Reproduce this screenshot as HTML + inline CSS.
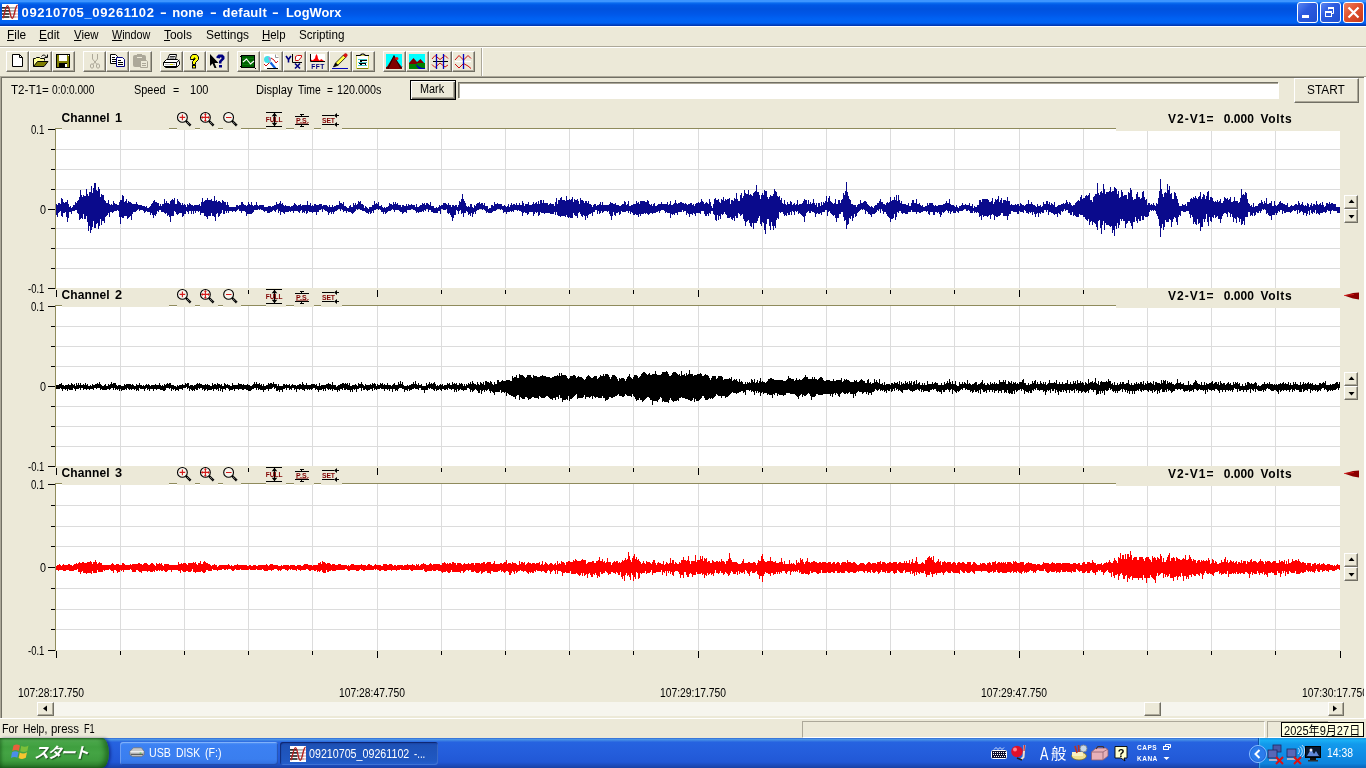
<!DOCTYPE html>
<html lang="ja">
<head>
<meta charset="utf-8">
<title>09210705_09261102 - none - default - LogWorx</title>
<style>
html,body{margin:0;padding:0;}
body{will-change:transform;width:1366px;height:768px;overflow:hidden;background:#ECE9D8;position:relative;
 font-family:"Liberation Sans","Noto Sans CJK JP",sans-serif;font-size:12px;color:#000;}
.abs{position:absolute;}
.tl{position:absolute;left:0;white-space:pre;}
.tl span{position:absolute;top:0;transform-origin:0 0;white-space:pre;}
.t{position:absolute;white-space:nowrap;line-height:14px;}
/* title bar */
#title{left:0;top:0;width:1366px;height:26px;
 background:linear-gradient(to bottom,#3D95FF 0px,#3D95FF 1.500px,#0A6CF0 3px,#0057E5 5px,#0052DE 9px,#0057E8 14px,#0062F3 19px,#0061F2 23px,#0048CC 24.500px,#0032A8 26px);}
#title .cap{left:22px;top:5px;color:#fff;font-weight:bold;font-size:13px;line-height:16px;letter-spacing:.55px;}
.tb{position:absolute;top:2px;width:19px;height:19px;border:1px solid #fff;border-radius:3px;
 background:linear-gradient(135deg,#5B86F2 0%,#2C5BE0 40%,#1F4FD0 100%);}
.tb.close{background:linear-gradient(135deg,#ED8062 0%,#E0512D 45%,#C5381A 100%);}
/* menu */
#menu .t{top:28px;font-size:12px;}
u{text-decoration:underline;}
/* toolbar buttons */
.btn{position:absolute;top:51px;width:21px;height:19px;border-top:1px solid #fff;border-left:1px solid #fff;border-right:1px solid #716F64;border-bottom:1px solid #716F64;box-shadow:inset -1px -1px 0 #ACA899;}
/* plots */
.plot{position:absolute;left:56px;width:1284px;background:#fff;}
.ylab{position:absolute;font-size:12px;line-height:14px;text-align:right;width:40px;left:6px;}
.chn{position:absolute;left:62px;font-weight:bold;font-size:12px;letter-spacing:.6px;line-height:14px;white-space:nowrap;}
.vv{position:absolute;left:1168px;font-weight:bold;font-size:11.5px;letter-spacing:.5px;line-height:14px;white-space:pre;}
.sbtn{position:absolute;left:1344px;width:12px;height:12px;background:#ECE9D8;border-top:1px solid #fff;border-left:1px solid #fff;border-right:1px solid #716F64;border-bottom:1px solid #716F64;box-shadow:inset -1px -1px 0 #ACA899;}
.xl{position:absolute;top:685px;font-size:12px;line-height:14px;white-space:nowrap;letter-spacing:-.2px;}
/* taskbar */
#task{left:0;top:738px;width:1366px;height:30px;
 background:linear-gradient(to bottom,#3168D5 0%,#4993E6 5%,#2663E0 14%,#245DDB 50%,#2158D6 80%,#1941A5 100%);}
</style>
</head>
<body>
<!-- TITLE BAR -->
<div id="title" class="abs">
 <svg class="abs" style="left:2px;top:4px" width="16" height="16" viewBox="0 0 16 16"><rect width="16" height="16" fill="#fff"/><g fill="#000"><rect y="3.200" width="7.500" height="1.400"/><rect y="6.200" width="7.500" height="1.400"/><rect y="9.300" width="7.500" height="1.400"/><rect y="12.300" width="7.500" height="1.400"/></g><g fill="#9a9a9a"><rect x="7.500" y="3.200" width="6.500" height="1.400"/><rect x="7.500" y="6.200" width="6.500" height="1.400"/><rect x="7.500" y="9.300" width="6.500" height="1.400"/><rect x="7.500" y="12.300" width="6.500" height="1.400"/></g><g fill="#f0b0b0"><rect x="13.500" y="3.200" width="2.500" height="1.400"/><rect x="13.500" y="6.200" width="2.500" height="1.400"/><rect x="13.500" y="9.300" width="2.500" height="1.400"/><rect x="13.500" y="12.300" width="2.500" height="1.400"/></g><path d="M0.700 14.200C2.200 13 3.500 1.600 5.500 1.600C7.500 1.600 8 14.200 10.300 14.200C12.500 14.200 12.800 2.200 15.600 1.200" fill="none" stroke="#B82020" stroke-width="1.400"/></svg>
 <div class="tb" style="left:1297px"><div class="abs" style="left:4px;top:12px;width:7px;height:3px;background:#fff"></div></div>
 <div class="tb" style="left:1320px">
  <svg class="abs" style="left:0;top:0" width="19" height="19"><path d="M7.5 6.5V4.5H12.5V10.5H10.5" fill="none" stroke="#fff" stroke-width="1"/><rect x="7" y="4" width="6" height="2" fill="#fff"/><rect x="4.5" y="8.500" width="6" height="5" fill="none" stroke="#fff"/><rect x="4" y="8" width="7" height="2" fill="#fff"/></svg>
 </div>
 <div class="tb close" style="left:1343px">
  <svg class="abs" style="left:0;top:0" width="19" height="19"><path d="M4.5 4.500L14.500 14.500M14.500 4.500L4.500 14.500" stroke="#fff" stroke-width="2.200"/></svg>
 </div>
</div>
<div class="abs" style="left:0;top:26px;width:1366px;height:1px;background:#fff"></div>

<!-- MENU -->
<div class="tl" style="top:28.04px;font-size:12px;line-height:15px;font-weight:normal;font-style:normal;color:#000;"><span style="left:6.91px;transform:scaleX(0.9874)"><u>F</u>ile</span> <span style="left:39.10px;transform:scaleX(0.9958)"><u>E</u>dit</span> <span style="left:73.92px;transform:scaleX(0.9497)"><u>V</u>iew</span> <span style="left:112.04px;transform:scaleX(0.8996)"><u>W</u>indow</span> <span style="left:164.30px;transform:scaleX(0.9959)"><u>T</u>ools</span> <span style="left:205.60px;transform:scaleX(0.9917)">Settings</span> <span style="left:262.42px;transform:scaleX(0.9519)"><u>H</u>elp</span> <span style="left:299.01px;transform:scaleX(0.9724)">Scripting</span></div>
<div class="abs" style="left:0;top:46px;width:1366px;height:1px;background:#ACA899"></div>
<div class="abs" style="left:0;top:47px;width:1366px;height:1px;background:#fff"></div>

<!-- TOOLBAR -->
<div id="toolbar">
<div class="btn" style="left:6px"></div>
<div class="btn" style="left:29px"></div>
<div class="btn" style="left:52px"></div>
<div class="btn" style="left:83px"></div>
<div class="btn" style="left:106px"></div>
<div class="btn" style="left:129px"></div>
<div class="btn" style="left:160px"></div>
<div class="btn" style="left:183px"></div>
<div class="btn" style="left:206px"></div>
<div class="btn" style="left:237px"></div>
<div class="btn" style="left:260px"></div>
<div class="btn" style="left:283px"></div>
<div class="btn" style="left:306px"></div>
<div class="btn" style="left:329px"></div>
<div class="btn" style="left:352px"></div>
<div class="btn" style="left:383px"></div>
<div class="btn" style="left:406px"></div>
<div class="btn" style="left:429px"></div>
<div class="btn" style="left:452px"></div>
<svg class="abs" style="left:0;top:0" width="490" height="76" viewBox="0 0 490 76"><path d="M12.500 54.500H19.500L22.500 57.500V66.500H12.500Z" fill="#fff" stroke="#000"/><path d="M19.500 54.500V57.500H22.500" fill="none" stroke="#000"/>
<path d="M33.500 66.500V58.500H35.500L36.500 57.500H39.500L40.500 58.500H44.500V60.500" fill="#FFFF99" stroke="#000"/><path d="M33.500 66.500L37.500 61.500H48L44 66.500Z" fill="#808000" stroke="#000"/><path d="M41.500 56.500C42.500 54.500 45.500 54.500 46.500 57.500" fill="none" stroke="#000"/><path d="M44.500 57.500H47.500V54.500" fill="none" stroke="#000"/>
<rect x="56.500" y="54.500" width="13" height="13" fill="#808000" stroke="#000"/><rect x="59" y="55" width="8" height="6" fill="#fff"/><rect x="59" y="63" width="8" height="4" fill="#000"/><rect x="65" y="64" width="2" height="3" fill="#fff"/><rect x="68" y="55" width="1" height="1" fill="#fff"/>
<g fill="none" stroke="#ACA899"><path d="M92.500 54V59L97 64.500M97.500 54V59L93 64.500"/><ellipse cx="92" cy="66" rx="1.6" ry="2.200"/><ellipse cx="98" cy="66" rx="1.6" ry="2.200"/></g>
<path d="M110.500 54.500H115.500L117.500 56.500V63.500H110.500Z" fill="#fff" stroke="#000"/><path d="M112 57.500H115M112 59.500H116M112 61.500H116" stroke="#000"/><path d="M116.500 57.500H122.500L124.500 59.500V66.500H116.500Z" fill="#fff" stroke="#000080"/><path d="M118 60.500H121M118 62.500H123M118 64.500H123" stroke="#000"/>
<rect x="133" y="55" width="13" height="12" rx="2" fill="#ACA899"/><rect x="137" y="54" width="5" height="2" fill="#ACA899"/><rect x="137" y="57" width="5" height="1" fill="#ECE9D8"/><path d="M140.500 60.500H146.500L147.500 61.500V67.500H140.500Z" fill="#ECE9D8" stroke="#ACA899"/><path d="M142 63.500H146M142 65.500H146" stroke="#ACA899"/>
<path d="M167.500 59.500L169.500 54.500H176.500L175.500 59.500" fill="#fff" stroke="#000"/><path d="M170 56.500H175M169.500 58H174.500" stroke="#000" stroke-width=".8"/><path d="M163.500 62.500L166.500 59.500H177.500L179.500 61.500V64.500L176.500 67.500H165.500L163.500 65.500Z" fill="#fff" stroke="#000"/><path d="M163.500 62.500H176.500L179.500 60M176.500 62.500V67" fill="none" stroke="#000"/><rect x="165" y="64" width="10" height="1" fill="#C0C0C0"/><rect x="170" y="64" width="3" height="1" fill="#D8D800"/><path d="M164 66.500H176" stroke="#000"/>
<path d="M190.500 58.500V57L192.500 54.500H196.500L198.500 57V59.500L195.500 62.500V64.500H192.500V61.500L195 59V58H194V59.500H190.500Z" fill="#FFFF00" stroke="#000" stroke-linejoin="round"/><rect x="192.500" y="65.500" width="3" height="2.500" fill="#FFFF00" stroke="#000"/>
<path d="M210 54V66L212.500 63.500L214.500 68H216.500L214.500 63H218.500Z" fill="#000"/><path d="M216.500 58V56.500L218.500 54.500H222.500L224.500 56.500V59L221.500 62V63.500H219V61L221.500 58.500V57.500H220V58.500Z" fill="#000080"/><rect x="219" y="65" width="3" height="2.500" fill="#000080"/>
<rect x="241.500" y="55.500" width="13" height="12" fill="#006000" stroke="#000"/><path d="M242 58.500H254M242 61.500H254M242 64.500H254" stroke="#0A7A0A"/><path d="M243 62L246.500 59L250.500 64L254 61" fill="none" stroke="#fff" stroke-width="1.200"/><rect x="240" y="56" width="1" height="1"/><rect x="240" y="66" width="1" height="1"/><rect x="255" y="68" width="1" height="1"/>
<path d="M264 54H276L279 57V69H264Z" fill="#fff"/><path d="M275.500 54.500V57.500H278.500" fill="none" stroke="#9a9a9a"/><path d="M264 64L266 66L269 63L271 58L274 60L276 63L278 61" fill="none" stroke="#D01010"/><circle cx="267.500" cy="59.500" r="3.500" fill="#40E0E8"/><path d="M268 57a3 3 0 0 1 2 5z" fill="#D080D0"/><path d="M270.500 62.500L275.500 68.500" stroke="#1060E0" stroke-width="2.200"/><path d="M267 68.500H278" stroke="#000"/>
<path d="M286 56L288.500 59.500L291 56M288.500 59.500V62.500" fill="none" stroke="#000080" stroke-width="1.600"/><path d="M292.500 54V62.500H302" fill="none" stroke="#000"/><path d="M295.500 59.500V56.500L297.500 55.500H301.500V57L298.500 60.500H295.500Z" fill="#fff" stroke="#D01010"/><path d="M295 63.500L300 68.500M300 63.500L295 68.500" stroke="#000080" stroke-width="1.600"/>
<rect x="310" y="54" width="15" height="8" fill="#fff"/><path d="M311 61V59.500L312 60L313 60.500L314 59L315 58.500L315.500 56L316.500 54L317.500 56L318 58.500L319 60L320 60.500L321 59L322 59.500L323 60.500L324.500 61Z" fill="#FF0000"/><path d="M310.500 54V61.500H325" fill="none" stroke="#000"/><text x="311.200" y="69" font-family="Liberation Sans, sans-serif" font-weight="bold" font-size="6.600" fill="#000080" letter-spacing=".5">FFT</text>
<path d="M335.500 63L343.500 55L345.800 57.300L337.800 65.300Z" fill="#FFFF40" stroke="#000" stroke-width=".8"/><path d="M343.200 55.300L344.500 54a1.600 1.600 0 0 1 2.300 2.300L345.500 57.600Z" fill="#E01010" stroke="#A00000" stroke-width=".5"/><path d="M333.500 67L335.500 63L337.800 65.300Z" fill="#000" stroke="#000" stroke-width=".8"/><path d="M332 68.500H348" stroke="#0000C0"/>
<rect x="356.500" y="55.500" width="12" height="13" fill="#fff" stroke="#D8D860"/><path d="M356 55.500H360L362 54H363.500L365.500 55.500H369" fill="none" stroke="#000" stroke-width="1.200"/><path d="M358 59.500H367M358 62.500H367M358 65.500H367" stroke="#40C8C8"/><path d="M360 60.500H367M359 63.500H366" stroke="#000"/><path d="M357 68.500H368" stroke="#808000"/><rect x="360" y="61" width="2" height="1"/><rect x="360" y="64" width="2" height="1"/><rect x="365" y="64" width="1" height="1"/>
<rect x="386" y="54" width="16" height="15" fill="#00FFFF"/><path d="M386 69V67.500L387.500 66L394 55.500L397 61L401 66L402 67.500V69Z" fill="#800000"/><path d="M386.500 67L388 68.500L394 55.500L400.500 68L402 66.500" fill="none" stroke="#000" stroke-width=".7"/><circle cx="396.800" cy="58.500" r="1.600" fill="#FF0000"/>
<rect x="409" y="54" width="16" height="15" fill="#00FFFF"/><path d="M409 63L413.500 58L417 62L420.500 59L425 64V66H409Z" fill="#800000"/><path d="M409 64H416L418 63H425V69H409Z" fill="#008000"/><path d="M416 64C418 66 420 68 425 68V69H419C417 67 416 66 416 64Z" fill="#0000C0"/>
<path d="M432 59L435 55.500L440 59.500L445 55.500L448 58.500M432 64.500L435 67.500L440 63L445 67L448 65" fill="none" stroke="#D01010"/><path d="M433 61.500H448" stroke="#000"/><path d="M436.500 54V69M443.500 54V69" stroke="#0000C0" stroke-width="1.300"/>
<path d="M455 60L459 55.500L463.500 60L468 55.500L471 58.500M455 64L459 68L463.500 63.500L468 66L471 68.500" fill="none" stroke="#D01010"/><path d="M455 61.500H471" stroke="#fff" stroke-width="1.400"/><path d="M463.500 54V69" stroke="#0000C0" stroke-width="1.300"/></svg>

</div>
<div class="abs" style="left:481px;top:48px;width:1px;height:28px;background:#ACA899"></div>
<div class="abs" style="left:482px;top:48px;width:1px;height:28px;background:#fff"></div>

<!-- CLIENT FRAME -->
<div class="abs" style="left:0;top:76px;width:1366px;height:1px;background:#ACA899"></div>
<div class="abs" style="left:0;top:77px;width:1364px;height:1px;background:#716F64"></div>
<div class="abs" style="left:0;top:76px;width:1px;height:642px;background:#ACA899"></div>
<div class="abs" style="left:1px;top:77px;width:1px;height:641px;background:#716F64"></div>
<div class="abs" style="left:1364px;top:77px;width:2px;height:642px;background:#fff"></div>

<!-- INFO BAR -->
<div class="abs" style="left:410px;top:80px;width:44px;height:18px;border:1px solid #000;background:#ECE9D8;box-shadow:inset 1px 1px 0 #fff,inset -1px -1px 0 #716F64,inset -2px -2px 0 #ACA899;"></div>
<div class="abs" style="left:458px;top:82px;width:819px;height:15px;background:#fff;border-top:1px solid #716F64;border-left:1px solid #716F64;box-shadow:inset 1px 1px 0 #ACA899, 1px 1px 0 #fff;"></div>
<div class="abs" style="left:1294px;top:78px;width:63px;height:23px;background:#ECE9D8;border-top:1px solid #fff;border-left:1px solid #fff;border-right:1px solid #716F64;border-bottom:1px solid #716F64;box-shadow:inset -1px -1px 0 #ACA899;"></div>

<!-- PLOTS -->
<div class="plot" style="top:129px;height:159px"></div>
<div class="plot" style="top:306px;height:160px"></div>
<div class="plot" style="top:484px;height:166px"></div>

<div class="tl" style="top:110.94px;font-size:12px;line-height:15px;font-weight:bold;font-style:normal;color:#000;"><span style="left:61.60px;letter-spacing:0.093px">Channel</span> <span style="left:114.50px;transform:scaleX(1.0617)">1</span></div><div class="tl" style="top:112.04px;font-size:12px;line-height:15px;font-weight:bold;font-style:normal;color:#000;"><span style="left:1167.90px;letter-spacing:1.048px">V2-V1=</span> <span style="left:1223.70px;letter-spacing:0.042px">0.000</span> <span style="left:1260.40px;letter-spacing:0.687px">Volts</span></div><div class="tl" style="top:123.04px;font-size:12px;line-height:15px;font-weight:normal;font-style:normal;color:#000;"><span style="left:31.38px;transform:scaleX(0.8030)">0.1</span></div><div class="tl" style="top:203.04px;font-size:12px;line-height:15px;font-weight:normal;font-style:normal;color:#000;"><span style="left:40.44px;transform:scaleX(0.8972)">0</span></div><div class="tl" style="top:282.04px;font-size:12px;line-height:15px;font-weight:normal;font-style:normal;color:#000;"><span style="left:28.48px;transform:scaleX(0.7879)">-0.1</span></div><div class="sbtn" style="top:195px"></div><div class="sbtn" style="top:209px"></div><div class="tl" style="top:287.94px;font-size:12px;line-height:15px;font-weight:bold;font-style:normal;color:#000;"><span style="left:61.60px;letter-spacing:0.093px">Channel</span> <span style="left:114.50px;transform:scaleX(1.0617)">2</span></div><div class="tl" style="top:289.04px;font-size:12px;line-height:15px;font-weight:bold;font-style:normal;color:#000;"><span style="left:1167.90px;letter-spacing:1.048px">V2-V1=</span> <span style="left:1223.70px;letter-spacing:0.042px">0.000</span> <span style="left:1260.40px;letter-spacing:0.687px">Volts</span></div><div class="tl" style="top:300.04px;font-size:12px;line-height:15px;font-weight:normal;font-style:normal;color:#000;"><span style="left:31.38px;transform:scaleX(0.8030)">0.1</span></div><div class="tl" style="top:380.04px;font-size:12px;line-height:15px;font-weight:normal;font-style:normal;color:#000;"><span style="left:40.44px;transform:scaleX(0.8972)">0</span></div><div class="tl" style="top:460.04px;font-size:12px;line-height:15px;font-weight:normal;font-style:normal;color:#000;"><span style="left:28.48px;transform:scaleX(0.7879)">-0.1</span></div><div class="sbtn" style="top:372px"></div><div class="sbtn" style="top:386px"></div><div class="tl" style="top:465.94px;font-size:12px;line-height:15px;font-weight:bold;font-style:normal;color:#000;"><span style="left:61.60px;letter-spacing:0.093px">Channel</span> <span style="left:114.50px;transform:scaleX(1.0617)">3</span></div><div class="tl" style="top:467.04px;font-size:12px;line-height:15px;font-weight:bold;font-style:normal;color:#000;"><span style="left:1167.90px;letter-spacing:1.048px">V2-V1=</span> <span style="left:1223.70px;letter-spacing:0.042px">0.000</span> <span style="left:1260.40px;letter-spacing:0.687px">Volts</span></div><div class="tl" style="top:478.04px;font-size:12px;line-height:15px;font-weight:normal;font-style:normal;color:#000;"><span style="left:31.38px;transform:scaleX(0.8030)">0.1</span></div><div class="tl" style="top:561.04px;font-size:12px;line-height:15px;font-weight:normal;font-style:normal;color:#000;"><span style="left:40.44px;transform:scaleX(0.8972)">0</span></div><div class="tl" style="top:644.04px;font-size:12px;line-height:15px;font-weight:normal;font-style:normal;color:#000;"><span style="left:28.48px;transform:scaleX(0.7879)">-0.1</span></div><div class="sbtn" style="top:553px"></div><div class="sbtn" style="top:567px"></div>
<svg class="abs" style="left:0;top:0" width="1366" height="768" viewBox="0 0 1366 768" shape-rendering="crispEdges">
 <rect x="120" y="129" width="1" height="159" fill="#dcdcdc"/><rect x="184" y="129" width="1" height="159" fill="#dcdcdc"/><rect x="248" y="129" width="1" height="159" fill="#dcdcdc"/><rect x="312" y="129" width="1" height="159" fill="#dcdcdc"/><rect x="377" y="129" width="1" height="159" fill="#dcdcdc"/><rect x="441" y="129" width="1" height="159" fill="#dcdcdc"/><rect x="505" y="129" width="1" height="159" fill="#dcdcdc"/><rect x="569" y="129" width="1" height="159" fill="#dcdcdc"/><rect x="633" y="129" width="1" height="159" fill="#dcdcdc"/><rect x="698" y="129" width="1" height="159" fill="#dcdcdc"/><rect x="762" y="129" width="1" height="159" fill="#dcdcdc"/><rect x="826" y="129" width="1" height="159" fill="#dcdcdc"/><rect x="890" y="129" width="1" height="159" fill="#dcdcdc"/><rect x="954" y="129" width="1" height="159" fill="#dcdcdc"/><rect x="1019" y="129" width="1" height="159" fill="#dcdcdc"/><rect x="1083" y="129" width="1" height="159" fill="#dcdcdc"/><rect x="1147" y="129" width="1" height="159" fill="#dcdcdc"/><rect x="1211" y="129" width="1" height="159" fill="#dcdcdc"/><rect x="1275" y="129" width="1" height="159" fill="#dcdcdc"/><rect x="56" y="149" width="1284" height="1" fill="#dcdcdc"/><rect x="56" y="169" width="1284" height="1" fill="#dcdcdc"/><rect x="56" y="189" width="1284" height="1" fill="#dcdcdc"/><rect x="56" y="209" width="1284" height="1" fill="#dcdcdc"/><rect x="56" y="228" width="1284" height="1" fill="#dcdcdc"/><rect x="56" y="248" width="1284" height="1" fill="#dcdcdc"/><rect x="56" y="268" width="1284" height="1" fill="#dcdcdc"/><rect x="120" y="306" width="1" height="160" fill="#dcdcdc"/><rect x="184" y="306" width="1" height="160" fill="#dcdcdc"/><rect x="248" y="306" width="1" height="160" fill="#dcdcdc"/><rect x="312" y="306" width="1" height="160" fill="#dcdcdc"/><rect x="377" y="306" width="1" height="160" fill="#dcdcdc"/><rect x="441" y="306" width="1" height="160" fill="#dcdcdc"/><rect x="505" y="306" width="1" height="160" fill="#dcdcdc"/><rect x="569" y="306" width="1" height="160" fill="#dcdcdc"/><rect x="633" y="306" width="1" height="160" fill="#dcdcdc"/><rect x="698" y="306" width="1" height="160" fill="#dcdcdc"/><rect x="762" y="306" width="1" height="160" fill="#dcdcdc"/><rect x="826" y="306" width="1" height="160" fill="#dcdcdc"/><rect x="890" y="306" width="1" height="160" fill="#dcdcdc"/><rect x="954" y="306" width="1" height="160" fill="#dcdcdc"/><rect x="1019" y="306" width="1" height="160" fill="#dcdcdc"/><rect x="1083" y="306" width="1" height="160" fill="#dcdcdc"/><rect x="1147" y="306" width="1" height="160" fill="#dcdcdc"/><rect x="1211" y="306" width="1" height="160" fill="#dcdcdc"/><rect x="1275" y="306" width="1" height="160" fill="#dcdcdc"/><rect x="56" y="326" width="1284" height="1" fill="#dcdcdc"/><rect x="56" y="346" width="1284" height="1" fill="#dcdcdc"/><rect x="56" y="366" width="1284" height="1" fill="#dcdcdc"/><rect x="56" y="386" width="1284" height="1" fill="#dcdcdc"/><rect x="56" y="406" width="1284" height="1" fill="#dcdcdc"/><rect x="56" y="426" width="1284" height="1" fill="#dcdcdc"/><rect x="56" y="446" width="1284" height="1" fill="#dcdcdc"/><rect x="120" y="484" width="1" height="166" fill="#dcdcdc"/><rect x="184" y="484" width="1" height="166" fill="#dcdcdc"/><rect x="248" y="484" width="1" height="166" fill="#dcdcdc"/><rect x="312" y="484" width="1" height="166" fill="#dcdcdc"/><rect x="377" y="484" width="1" height="166" fill="#dcdcdc"/><rect x="441" y="484" width="1" height="166" fill="#dcdcdc"/><rect x="505" y="484" width="1" height="166" fill="#dcdcdc"/><rect x="569" y="484" width="1" height="166" fill="#dcdcdc"/><rect x="633" y="484" width="1" height="166" fill="#dcdcdc"/><rect x="698" y="484" width="1" height="166" fill="#dcdcdc"/><rect x="762" y="484" width="1" height="166" fill="#dcdcdc"/><rect x="826" y="484" width="1" height="166" fill="#dcdcdc"/><rect x="890" y="484" width="1" height="166" fill="#dcdcdc"/><rect x="954" y="484" width="1" height="166" fill="#dcdcdc"/><rect x="1019" y="484" width="1" height="166" fill="#dcdcdc"/><rect x="1083" y="484" width="1" height="166" fill="#dcdcdc"/><rect x="1147" y="484" width="1" height="166" fill="#dcdcdc"/><rect x="1211" y="484" width="1" height="166" fill="#dcdcdc"/><rect x="1275" y="484" width="1" height="166" fill="#dcdcdc"/><rect x="56" y="505" width="1284" height="1" fill="#dcdcdc"/><rect x="56" y="526" width="1284" height="1" fill="#dcdcdc"/><rect x="56" y="546" width="1284" height="1" fill="#dcdcdc"/><rect x="56" y="567" width="1284" height="1" fill="#dcdcdc"/><rect x="56" y="588" width="1284" height="1" fill="#dcdcdc"/><rect x="56" y="609" width="1284" height="1" fill="#dcdcdc"/><rect x="56" y="629" width="1284" height="1" fill="#dcdcdc"/>
 <rect x="55" y="128" width="7" height="1" fill="#8F8B5C"/><rect x="169" y="128" width="8" height="1" fill="#8F8B5C"/><rect x="195" y="128" width="5" height="1" fill="#8F8B5C"/><rect x="218" y="128" width="5" height="1" fill="#8F8B5C"/><rect x="241" y="128" width="25" height="1" fill="#8F8B5C"/><rect x="286" y="128" width="8" height="1" fill="#8F8B5C"/><rect x="314" y="128" width="7" height="1" fill="#8F8B5C"/><rect x="342" y="128" width="774" height="1" fill="#8F8B5C"/><rect x="62" y="129" width="107" height="1" fill="#ECE9D8"/><rect x="177" y="129" width="18" height="1" fill="#ECE9D8"/><rect x="200" y="129" width="18" height="1" fill="#ECE9D8"/><rect x="223" y="129" width="18" height="1" fill="#ECE9D8"/><rect x="266" y="129" width="20" height="1" fill="#ECE9D8"/><rect x="294" y="129" width="20" height="1" fill="#ECE9D8"/><rect x="321" y="129" width="21" height="1" fill="#ECE9D8"/><rect x="1116" y="129" width="224" height="2" fill="#ECE9D8"/><g shape-rendering="auto"><circle cx="182.4" cy="117.4" r="4.900" fill="#F6F4EC" stroke="#000" stroke-width="1.100"/><path d="M186.0 121.0L190.6 125.6" stroke="#000" stroke-width="2.400"/><path d="M187.0 122.0L190.2 125.2" stroke="#fff" stroke-width=".7" stroke-dasharray="1 1"/><path d="M179.6 117.4H185.2M182.4 114.6V120.2" stroke="#D41A1A" stroke-width="1.100"/><circle cx="205.4" cy="117.4" r="4.900" fill="#F6F4EC" stroke="#000" stroke-width="1.100"/><path d="M209.0 121.0L213.6 125.6" stroke="#000" stroke-width="2.400"/><path d="M210.0 122.0L213.2 125.2" stroke="#fff" stroke-width=".7" stroke-dasharray="1 1"/><path d="M201.4 117.4H209.4M205.4 113.4V121.4" stroke="#D41A1A" stroke-width="1.100"/><path d="M201.2 117.4l1.500 -1.500v3zM209.6 117.4l-1.500 -1.500v3zM205.4 113.2l-1.500 1.500h3zM205.4 121.6l-1.500 -1.500h3z" fill="#D41A1A"/><circle cx="228.6" cy="117.4" r="4.900" fill="#F6F4EC" stroke="#000" stroke-width="1.100"/><path d="M232.2 121.0L236.8 125.6" stroke="#000" stroke-width="2.400"/><path d="M233.2 122.0L236.4 125.2" stroke="#fff" stroke-width=".7" stroke-dasharray="1 1"/><path d="M226.0 117.5H231.5" stroke="#D41A1A" stroke-width="1"/><path d="M266 112.5H282M266 126.5H282" stroke="#000" stroke-width="1"/><path d="M274.500 113.0V127.0" stroke="#000"/><path d="M274.500 112.8L277.300 116.2H271.700ZM274.500 126.2L277.300 122.8H271.700Z" fill="#000"/><text x="265.800" y="122.0" font-family="Liberation Sans, sans-serif" font-weight="bold" font-size="6.600" fill="#800000" letter-spacing="0">FULL</text><path d="M295 116.5H309M295 124.5H309" stroke="#000"/><path d="M300 114.5H304M301.500 114.0V117.0M300 126.5H304M301.500 124.0V127.0" stroke="#000"/><text x="296" y="123.0" font-family="Liberation Sans, sans-serif" font-weight="bold" font-size="7" fill="#800000" letter-spacing=".2">P.S.</text><path d="M296 123.4H308" stroke="#800000" stroke-width=".6"/><path d="M322 115.5H334M322 124.5H334" stroke="#000"/><path d="M334 115.5l3 -2.500v2h2v1h-2v2zM334 124.5l3 -2.500v2h2v1h-2v2z" fill="#000"/><text x="322" y="122.5" font-family="Liberation Sans, sans-serif" font-weight="bold" font-size="6.800" fill="#800000" letter-spacing="-.1">SET</text></g><rect x="55" y="128" width="1" height="161" fill="#8F8B5C"/><rect x="48" y="129" width="7" height="1" fill="#000"/><rect x="51" y="149" width="4" height="1" fill="#000"/><rect x="51" y="169" width="4" height="1" fill="#000"/><rect x="51" y="189" width="4" height="1" fill="#000"/><rect x="48" y="209" width="7" height="1" fill="#000"/><rect x="51" y="228" width="4" height="1" fill="#000"/><rect x="51" y="248" width="4" height="1" fill="#000"/><rect x="51" y="268" width="4" height="1" fill="#000"/><rect x="48" y="288" width="7" height="1" fill="#000"/><path d="M1348.500 203h6l-3 -3.500zM1348.500 215h6l-3 3.500z" fill="#000" shape-rendering="auto"/><rect x="56" y="290" width="1" height="7" fill="#000"/><rect x="248" y="290" width="1" height="4" fill="#000"/><rect x="377" y="290" width="1" height="7" fill="#000"/><rect x="441" y="290" width="1" height="4" fill="#000"/><rect x="505" y="290" width="1" height="4" fill="#000"/><rect x="569" y="290" width="1" height="4" fill="#000"/><rect x="633" y="290" width="1" height="4" fill="#000"/><rect x="698" y="290" width="1" height="7" fill="#000"/><rect x="762" y="290" width="1" height="4" fill="#000"/><rect x="826" y="290" width="1" height="4" fill="#000"/><rect x="890" y="290" width="1" height="4" fill="#000"/><rect x="954" y="290" width="1" height="4" fill="#000"/><rect x="1019" y="290" width="1" height="7" fill="#000"/><rect x="1083" y="290" width="1" height="4" fill="#000"/><rect x="55" y="305" width="7" height="1" fill="#8F8B5C"/><rect x="169" y="305" width="8" height="1" fill="#8F8B5C"/><rect x="195" y="305" width="5" height="1" fill="#8F8B5C"/><rect x="218" y="305" width="5" height="1" fill="#8F8B5C"/><rect x="241" y="305" width="25" height="1" fill="#8F8B5C"/><rect x="286" y="305" width="8" height="1" fill="#8F8B5C"/><rect x="314" y="305" width="7" height="1" fill="#8F8B5C"/><rect x="342" y="305" width="774" height="1" fill="#8F8B5C"/><rect x="62" y="306" width="107" height="1" fill="#ECE9D8"/><rect x="177" y="306" width="18" height="1" fill="#ECE9D8"/><rect x="200" y="306" width="18" height="1" fill="#ECE9D8"/><rect x="223" y="306" width="18" height="1" fill="#ECE9D8"/><rect x="266" y="306" width="20" height="1" fill="#ECE9D8"/><rect x="294" y="306" width="20" height="1" fill="#ECE9D8"/><rect x="321" y="306" width="21" height="1" fill="#ECE9D8"/><rect x="1116" y="306" width="224" height="2" fill="#ECE9D8"/><g shape-rendering="auto"><circle cx="182.4" cy="294.4" r="4.900" fill="#F6F4EC" stroke="#000" stroke-width="1.100"/><path d="M186.0 298.0L190.6 302.6" stroke="#000" stroke-width="2.400"/><path d="M187.0 299.0L190.2 302.2" stroke="#fff" stroke-width=".7" stroke-dasharray="1 1"/><path d="M179.6 294.4H185.2M182.4 291.6V297.2" stroke="#D41A1A" stroke-width="1.100"/><circle cx="205.4" cy="294.4" r="4.900" fill="#F6F4EC" stroke="#000" stroke-width="1.100"/><path d="M209.0 298.0L213.6 302.6" stroke="#000" stroke-width="2.400"/><path d="M210.0 299.0L213.2 302.2" stroke="#fff" stroke-width=".7" stroke-dasharray="1 1"/><path d="M201.4 294.4H209.4M205.4 290.4V298.4" stroke="#D41A1A" stroke-width="1.100"/><path d="M201.2 294.4l1.500 -1.500v3zM209.6 294.4l-1.500 -1.500v3zM205.4 290.2l-1.500 1.500h3zM205.4 298.6l-1.500 -1.500h3z" fill="#D41A1A"/><circle cx="228.6" cy="294.4" r="4.900" fill="#F6F4EC" stroke="#000" stroke-width="1.100"/><path d="M232.2 298.0L236.8 302.6" stroke="#000" stroke-width="2.400"/><path d="M233.2 299.0L236.4 302.2" stroke="#fff" stroke-width=".7" stroke-dasharray="1 1"/><path d="M226.0 294.5H231.5" stroke="#D41A1A" stroke-width="1"/><path d="M266 289.5H282M266 303.5H282" stroke="#000" stroke-width="1"/><path d="M274.500 290.0V304.0" stroke="#000"/><path d="M274.500 289.8L277.300 293.2H271.700ZM274.500 303.2L277.300 299.8H271.700Z" fill="#000"/><text x="265.800" y="299.0" font-family="Liberation Sans, sans-serif" font-weight="bold" font-size="6.600" fill="#800000" letter-spacing="0">FULL</text><path d="M295 293.5H309M295 301.5H309" stroke="#000"/><path d="M300 291.5H304M301.500 291.0V294.0M300 303.5H304M301.500 301.0V304.0" stroke="#000"/><text x="296" y="300.0" font-family="Liberation Sans, sans-serif" font-weight="bold" font-size="7" fill="#800000" letter-spacing=".2">P.S.</text><path d="M296 300.4H308" stroke="#800000" stroke-width=".6"/><path d="M322 292.5H334M322 301.5H334" stroke="#000"/><path d="M334 292.5l3 -2.500v2h2v1h-2v2zM334 301.5l3 -2.500v2h2v1h-2v2z" fill="#000"/><text x="322" y="299.5" font-family="Liberation Sans, sans-serif" font-weight="bold" font-size="6.800" fill="#800000" letter-spacing="-.1">SET</text><path d="M1344 295.5L1353 293.0L1359 292.5V299.5L1353 298.5Z" fill="#8B0000"/><path d="M1344 295.5L1354 294.5" stroke="#E02020" stroke-width=".8"/></g><rect x="55" y="305" width="1" height="162" fill="#8F8B5C"/><rect x="48" y="306" width="7" height="1" fill="#000"/><rect x="51" y="326" width="4" height="1" fill="#000"/><rect x="51" y="346" width="4" height="1" fill="#000"/><rect x="51" y="366" width="4" height="1" fill="#000"/><rect x="48" y="386" width="7" height="1" fill="#000"/><rect x="51" y="406" width="4" height="1" fill="#000"/><rect x="51" y="426" width="4" height="1" fill="#000"/><rect x="51" y="446" width="4" height="1" fill="#000"/><rect x="48" y="466" width="7" height="1" fill="#000"/><path d="M1348.500 380h6l-3 -3.500zM1348.500 392h6l-3 3.500z" fill="#000" shape-rendering="auto"/><rect x="56" y="468" width="1" height="7" fill="#000"/><rect x="248" y="468" width="1" height="4" fill="#000"/><rect x="377" y="468" width="1" height="7" fill="#000"/><rect x="441" y="468" width="1" height="4" fill="#000"/><rect x="505" y="468" width="1" height="4" fill="#000"/><rect x="569" y="468" width="1" height="4" fill="#000"/><rect x="633" y="468" width="1" height="4" fill="#000"/><rect x="698" y="468" width="1" height="7" fill="#000"/><rect x="762" y="468" width="1" height="4" fill="#000"/><rect x="826" y="468" width="1" height="4" fill="#000"/><rect x="890" y="468" width="1" height="4" fill="#000"/><rect x="954" y="468" width="1" height="4" fill="#000"/><rect x="1019" y="468" width="1" height="7" fill="#000"/><rect x="1083" y="468" width="1" height="4" fill="#000"/><rect x="55" y="483" width="7" height="1" fill="#8F8B5C"/><rect x="169" y="483" width="8" height="1" fill="#8F8B5C"/><rect x="195" y="483" width="5" height="1" fill="#8F8B5C"/><rect x="218" y="483" width="5" height="1" fill="#8F8B5C"/><rect x="241" y="483" width="25" height="1" fill="#8F8B5C"/><rect x="286" y="483" width="8" height="1" fill="#8F8B5C"/><rect x="314" y="483" width="7" height="1" fill="#8F8B5C"/><rect x="342" y="483" width="774" height="1" fill="#8F8B5C"/><rect x="62" y="484" width="107" height="1" fill="#ECE9D8"/><rect x="177" y="484" width="18" height="1" fill="#ECE9D8"/><rect x="200" y="484" width="18" height="1" fill="#ECE9D8"/><rect x="223" y="484" width="18" height="1" fill="#ECE9D8"/><rect x="266" y="484" width="20" height="1" fill="#ECE9D8"/><rect x="294" y="484" width="20" height="1" fill="#ECE9D8"/><rect x="321" y="484" width="21" height="1" fill="#ECE9D8"/><rect x="1116" y="484" width="224" height="2" fill="#ECE9D8"/><g shape-rendering="auto"><circle cx="182.4" cy="472.4" r="4.900" fill="#F6F4EC" stroke="#000" stroke-width="1.100"/><path d="M186.0 476.0L190.6 480.6" stroke="#000" stroke-width="2.400"/><path d="M187.0 477.0L190.2 480.2" stroke="#fff" stroke-width=".7" stroke-dasharray="1 1"/><path d="M179.6 472.4H185.2M182.4 469.6V475.2" stroke="#D41A1A" stroke-width="1.100"/><circle cx="205.4" cy="472.4" r="4.900" fill="#F6F4EC" stroke="#000" stroke-width="1.100"/><path d="M209.0 476.0L213.6 480.6" stroke="#000" stroke-width="2.400"/><path d="M210.0 477.0L213.2 480.2" stroke="#fff" stroke-width=".7" stroke-dasharray="1 1"/><path d="M201.4 472.4H209.4M205.4 468.4V476.4" stroke="#D41A1A" stroke-width="1.100"/><path d="M201.2 472.4l1.500 -1.500v3zM209.6 472.4l-1.500 -1.500v3zM205.4 468.2l-1.500 1.500h3zM205.4 476.6l-1.500 -1.500h3z" fill="#D41A1A"/><circle cx="228.6" cy="472.4" r="4.900" fill="#F6F4EC" stroke="#000" stroke-width="1.100"/><path d="M232.2 476.0L236.8 480.6" stroke="#000" stroke-width="2.400"/><path d="M233.2 477.0L236.4 480.2" stroke="#fff" stroke-width=".7" stroke-dasharray="1 1"/><path d="M226.0 472.5H231.5" stroke="#D41A1A" stroke-width="1"/><path d="M266 467.5H282M266 481.5H282" stroke="#000" stroke-width="1"/><path d="M274.500 468.0V482.0" stroke="#000"/><path d="M274.500 467.8L277.300 471.2H271.700ZM274.500 481.2L277.300 477.8H271.700Z" fill="#000"/><text x="265.800" y="477.0" font-family="Liberation Sans, sans-serif" font-weight="bold" font-size="6.600" fill="#800000" letter-spacing="0">FULL</text><path d="M295 471.5H309M295 479.5H309" stroke="#000"/><path d="M300 469.5H304M301.500 469.0V472.0M300 481.5H304M301.500 479.0V482.0" stroke="#000"/><text x="296" y="478.0" font-family="Liberation Sans, sans-serif" font-weight="bold" font-size="7" fill="#800000" letter-spacing=".2">P.S.</text><path d="M296 478.4H308" stroke="#800000" stroke-width=".6"/><path d="M322 470.5H334M322 479.5H334" stroke="#000"/><path d="M334 470.5l3 -2.500v2h2v1h-2v2zM334 479.5l3 -2.500v2h2v1h-2v2z" fill="#000"/><text x="322" y="477.5" font-family="Liberation Sans, sans-serif" font-weight="bold" font-size="6.800" fill="#800000" letter-spacing="-.1">SET</text><path d="M1344 473.5L1353 471.0L1359 470.5V477.5L1353 476.5Z" fill="#8B0000"/><path d="M1344 473.5L1354 472.5" stroke="#E02020" stroke-width=".8"/></g><rect x="55" y="483" width="1" height="168" fill="#8F8B5C"/><rect x="48" y="484" width="7" height="1" fill="#000"/><rect x="51" y="505" width="4" height="1" fill="#000"/><rect x="51" y="526" width="4" height="1" fill="#000"/><rect x="51" y="546" width="4" height="1" fill="#000"/><rect x="48" y="567" width="7" height="1" fill="#000"/><rect x="51" y="588" width="4" height="1" fill="#000"/><rect x="51" y="609" width="4" height="1" fill="#000"/><rect x="51" y="629" width="4" height="1" fill="#000"/><rect x="48" y="650" width="7" height="1" fill="#000"/><path d="M1348.500 561h6l-3 -3.500zM1348.500 573h6l-3 3.500z" fill="#000" shape-rendering="auto"/><rect x="56" y="651" width="1" height="7" fill="#000"/><rect x="120" y="651" width="1" height="4" fill="#000"/><rect x="184" y="651" width="1" height="4" fill="#000"/><rect x="248" y="651" width="1" height="4" fill="#000"/><rect x="312" y="651" width="1" height="4" fill="#000"/><rect x="377" y="651" width="1" height="7" fill="#000"/><rect x="441" y="651" width="1" height="4" fill="#000"/><rect x="505" y="651" width="1" height="4" fill="#000"/><rect x="569" y="651" width="1" height="4" fill="#000"/><rect x="633" y="651" width="1" height="4" fill="#000"/><rect x="698" y="651" width="1" height="7" fill="#000"/><rect x="762" y="651" width="1" height="4" fill="#000"/><rect x="826" y="651" width="1" height="4" fill="#000"/><rect x="890" y="651" width="1" height="4" fill="#000"/><rect x="954" y="651" width="1" height="4" fill="#000"/><rect x="1019" y="651" width="1" height="7" fill="#000"/><rect x="1083" y="651" width="1" height="4" fill="#000"/><rect x="1147" y="651" width="1" height="4" fill="#000"/><rect x="1211" y="651" width="1" height="4" fill="#000"/><rect x="1275" y="651" width="1" height="4" fill="#000"/><rect x="1340" y="651" width="1" height="7" fill="#000"/>
 <g shape-rendering="auto">
 <path d="M56.5 204V215M57.5 205V217M58.5 203V213M59.5 203V212M60.5 204V211M61.5 198V216M62.5 199V217M63.5 202V213M64.5 203V213M65.5 202V212M66.5 202V217M67.5 200V222M68.5 204V218M69.5 207V212M70.5 206V212M71.5 208V214M72.5 207V211M73.5 205V211M74.5 205V211M75.5 202V210M76.5 203V210M77.5 201V213M78.5 200V214M79.5 197V220M80.5 190V219M81.5 195V218M82.5 197V219M83.5 195V214M84.5 196V219M85.5 196V219M86.5 189V216M87.5 194V222M88.5 196V231M89.5 192V226M90.5 192V233M91.5 186V230M92.5 193V227M93.5 188V221M94.5 183V228M95.5 183V228M96.5 190V224M97.5 191V223M98.5 187V229M99.5 189V226M100.5 197V219M101.5 194V225M102.5 195V221M103.5 195V221M104.5 200V223M105.5 201V217M106.5 203V216M107.5 203V215M108.5 200V213M109.5 204V217M110.5 205V212M111.5 204V212M112.5 205V213M113.5 201V212M114.5 203V211M115.5 204V211M116.5 204V211M117.5 205V210M118.5 205V211M119.5 202V217M120.5 200V224M121.5 200V217M122.5 195V218M123.5 196V218M124.5 202V216M125.5 201V216M126.5 199V216M127.5 203V219M128.5 201V218M129.5 202V217M130.5 202V216M131.5 203V220M132.5 204V214M133.5 204V212M134.5 204V212M135.5 204V212M136.5 202V211M137.5 204V210M138.5 205V209M139.5 205V211M140.5 205V210M141.5 205V210M142.5 206V210M143.5 206V211M144.5 206V213M145.5 207V212M146.5 206V211M147.5 208V212M148.5 208V212M149.5 207V212M150.5 206V215M151.5 204V213M152.5 203V215M153.5 201V218M154.5 200V215M155.5 202V216M156.5 202V214M157.5 203V211M158.5 203V212M159.5 206V210M160.5 204V210M161.5 206V212M162.5 204V212M163.5 204V212M164.5 199V213M165.5 203V214M166.5 201V213M167.5 203V216M168.5 203V215M169.5 204V217M170.5 201V222M171.5 200V216M172.5 199V216M173.5 200V216M174.5 198V211M175.5 204V212M176.5 204V214M177.5 199V215M178.5 201V214M179.5 202V213M180.5 203V213M181.5 205V213M182.5 203V217M183.5 205V216M184.5 204V214M185.5 205V214M186.5 207V211M187.5 204V212M188.5 205V214M189.5 203V211M190.5 204V211M191.5 205V214M192.5 205V211M193.5 206V214M194.5 205V211M195.5 205V213M196.5 205V211M197.5 205V211M198.5 205V212M199.5 204V211M200.5 206V215M201.5 202V213M202.5 198V213M203.5 202V213M204.5 201V216M205.5 200V216M206.5 200V217M207.5 198V219M208.5 200V216M209.5 200V216M210.5 200V216M211.5 199V213M212.5 201V216M213.5 201V216M214.5 196V217M215.5 201V221M216.5 200V214M217.5 202V213M218.5 201V217M219.5 201V216M220.5 202V214M221.5 203V213M222.5 200V210M223.5 201V214M224.5 202V214M225.5 202V211M226.5 205V213M227.5 202V211M228.5 205V213M229.5 207V211M230.5 207V211M231.5 207V211M232.5 207V212M233.5 207V211M234.5 207V211M235.5 207V212M236.5 205V211M237.5 205V210M238.5 206V209M239.5 205V211M240.5 205V211M241.5 202V213M242.5 202V211M243.5 204V211M244.5 205V211M245.5 205V212M246.5 206V216M247.5 205V214M248.5 202V214M249.5 204V214M250.5 205V214M251.5 202V214M252.5 205V213M253.5 206V212M254.5 205V210M255.5 205V210M256.5 202V210M257.5 205V210M258.5 206V209M259.5 205V210M260.5 205V209M261.5 205V210M262.5 205V210M263.5 205V211M264.5 207V212M265.5 207V211M266.5 207V211M267.5 207V213M268.5 206V213M269.5 206V213M270.5 206V212M271.5 207V212M272.5 206V211M273.5 206V210M274.5 205V211M275.5 205V212M276.5 202V210M277.5 204V209M278.5 204V213M279.5 203V211M280.5 201V215M281.5 204V212M282.5 203V212M283.5 205V213M284.5 206V214M285.5 205V212M286.5 206V212M287.5 206V212M288.5 206V212M289.5 206V211M290.5 207V212M291.5 206V211M292.5 206V211M293.5 205V213M294.5 203V211M295.5 204V211M296.5 205V211M297.5 206V211M298.5 205V212M299.5 205V213M300.5 204V211M301.5 206V210M302.5 205V213M303.5 205V212M304.5 205V213M305.5 205V211M306.5 205V214M307.5 201V213M308.5 205V211M309.5 205V212M310.5 203V212M311.5 206V212M312.5 205V213M313.5 206V212M314.5 204V212M315.5 204V212M316.5 205V215M317.5 205V212M318.5 205V212M319.5 204V210M320.5 204V210M321.5 204V209M322.5 206V212M323.5 205V209M324.5 205V210M325.5 205V211M326.5 205V211M327.5 206V212M328.5 207V215M329.5 205V213M330.5 207V212M331.5 207V214M332.5 205V212M333.5 207V214M334.5 206V212M335.5 206V211M336.5 205V211M337.5 205V210M338.5 205V209M339.5 201V209M340.5 203V211M341.5 203V209M342.5 204V210M343.5 202V212M344.5 206V211M345.5 206V211M346.5 207V213M347.5 208V211M348.5 208V212M349.5 206V212M350.5 205V212M351.5 207V213M352.5 207V214M353.5 203V213M354.5 205V212M355.5 203V211M356.5 205V209M357.5 204V210M358.5 201V209M359.5 202V209M360.5 201V210M361.5 204V210M362.5 204V211M363.5 205V211M364.5 208V211M365.5 206V212M366.5 207V213M367.5 208V213M368.5 209V214M369.5 207V212M370.5 207V214M371.5 207V213M372.5 205V211M373.5 205V213M374.5 201V210M375.5 204V210M376.5 203V209M377.5 204V209M378.5 202V210M379.5 206V209M380.5 206V210M381.5 205V212M382.5 207V212M383.5 208V214M384.5 207V212M385.5 208V214M386.5 207V213M387.5 207V212M388.5 206V211M389.5 203V211M390.5 204V211M391.5 204V210M392.5 205V209M393.5 202V210M394.5 204V212M395.5 202V210M396.5 204V210M397.5 203V210M398.5 205V210M399.5 205V211M400.5 205V212M401.5 207V212M402.5 205V214M403.5 205V213M404.5 206V212M405.5 206V212M406.5 204V213M407.5 206V210M408.5 204V210M409.5 205V210M410.5 205V210M411.5 204V209M412.5 205V209M413.5 205V210M414.5 205V210M415.5 207V211M416.5 204V213M417.5 207V212M418.5 207V213M419.5 206V212M420.5 205V212M421.5 205V212M422.5 203V211M423.5 204V212M424.5 203V210M425.5 205V211M426.5 203V209M427.5 203V209M428.5 204V212M429.5 205V210M430.5 202V210M431.5 206V212M432.5 206V212M433.5 206V213M434.5 208V213M435.5 208V213M436.5 207V213M437.5 208V213M438.5 207V211M439.5 205V211M440.5 206V214M441.5 205V209M442.5 205V209M443.5 203V210M444.5 203V210M445.5 203V210M446.5 204V209M447.5 205V213M448.5 203V214M449.5 205V213M450.5 205V215M451.5 207V217M452.5 205V221M453.5 205V218M454.5 206V215M455.5 205V215M456.5 205V210M457.5 207V211M458.5 205V214M459.5 201V211M460.5 202V210M461.5 199V214M462.5 194V213M463.5 199V217M464.5 201V213M465.5 203V213M466.5 206V211M467.5 207V212M468.5 206V215M469.5 207V214M470.5 204V216M471.5 204V213M472.5 207V217M473.5 208V214M474.5 205V212M475.5 206V214M476.5 204V211M477.5 203V210M478.5 203V210M479.5 202V209M480.5 204V209M481.5 203V209M482.5 203V210M483.5 205V209M484.5 203V210M485.5 206V211M486.5 206V213M487.5 206V212M488.5 209V213M489.5 208V213M490.5 208V213M491.5 205V213M492.5 205V212M493.5 206V211M494.5 202V211M495.5 204V211M496.5 204V210M497.5 203V209M498.5 204V209M499.5 204V209M500.5 204V210M501.5 204V209M502.5 206V210M503.5 206V213M504.5 205V212M505.5 206V212M506.5 207V214M507.5 206V212M508.5 204V212M509.5 207V212M510.5 205V211M511.5 203V212M512.5 205V211M513.5 204V212M514.5 204V210M515.5 205V210M516.5 203V210M517.5 205V211M518.5 205V210M519.5 203V211M520.5 205V211M521.5 205V212M522.5 201V216M523.5 203V213M524.5 206V212M525.5 204V213M526.5 204V213M527.5 204V215M528.5 202V214M529.5 205V212M530.5 205V212M531.5 205V212M532.5 204V212M533.5 202V216M534.5 204V214M535.5 203V212M536.5 202V213M537.5 204V212M538.5 201V216M539.5 204V215M540.5 200V212M541.5 200V213M542.5 203V213M543.5 200V213M544.5 203V214M545.5 203V213M546.5 203V213M547.5 203V213M548.5 205V213M549.5 204V213M550.5 203V214M551.5 204V214M552.5 204V214M553.5 204V214M554.5 206V212M555.5 202V215M556.5 198V212M557.5 204V215M558.5 200V216M559.5 200V216M560.5 198V217M561.5 197V216M562.5 200V216M563.5 200V216M564.5 200V216M565.5 201V217M566.5 196V215M567.5 200V217M568.5 200V218M569.5 199V217M570.5 200V218M571.5 199V218M572.5 197V218M573.5 202V213M574.5 199V215M575.5 200V216M576.5 200V216M577.5 199V218M578.5 201V213M579.5 204V212M580.5 198V214M581.5 200V216M582.5 200V217M583.5 201V215M584.5 203V216M585.5 201V220M586.5 201V216M587.5 203V218M588.5 201V215M589.5 204V214M590.5 204V214M591.5 205V213M592.5 207V216M593.5 205V212M594.5 204V212M595.5 204V210M596.5 206V210M597.5 205V214M598.5 205V211M599.5 204V214M600.5 202V213M601.5 205V211M602.5 202V213M603.5 205V212M604.5 205V211M605.5 205V211M606.5 205V211M607.5 205V212M608.5 205V211M609.5 204V214M610.5 202V216M611.5 203V220M612.5 203V216M613.5 204V212M614.5 204V215M615.5 203V216M616.5 205V213M617.5 205V213M618.5 205V212M619.5 206V215M620.5 206V214M621.5 205V211M622.5 204V212M623.5 204V212M624.5 201V212M625.5 202V212M626.5 205V211M627.5 204V211M628.5 201V213M629.5 206V211M630.5 206V214M631.5 205V212M632.5 205V213M633.5 204V215M634.5 204V215M635.5 204V214M636.5 201V215M637.5 203V215M638.5 202V217M639.5 204V214M640.5 201V216M641.5 201V214M642.5 201V214M643.5 201V214M644.5 201V213M645.5 202V214M646.5 202V213M647.5 200V214M648.5 201V215M649.5 204V214M650.5 205V213M651.5 204V213M652.5 206V214M653.5 204V213M654.5 203V213M655.5 206V213M656.5 206V212M657.5 205V212M658.5 204V211M659.5 204V213M660.5 204V211M661.5 202V210M662.5 204V210M663.5 204V210M664.5 204V211M665.5 204V213M666.5 204V212M667.5 202V213M668.5 205V213M669.5 204V213M670.5 201V218M671.5 205V214M672.5 205V215M673.5 204V214M674.5 203V215M675.5 200V213M676.5 203V213M677.5 204V215M678.5 203V212M679.5 203V212M680.5 202V212M681.5 202V212M682.5 203V210M683.5 203V212M684.5 204V211M685.5 203V211M686.5 204V215M687.5 205V213M688.5 204V214M689.5 204V217M690.5 203V214M691.5 203V214M692.5 205V215M693.5 204V213M694.5 206V214M695.5 204V216M696.5 203V213M697.5 203V213M698.5 202V213M699.5 203V213M700.5 202V214M701.5 199V211M702.5 201V211M703.5 202V211M704.5 204V214M705.5 203V216M706.5 202V216M707.5 203V214M708.5 204V216M709.5 199V213M710.5 202V214M711.5 206V211M712.5 208V211M713.5 204V214M714.5 199V215M715.5 198V220M716.5 200V221M717.5 200V215M718.5 199V220M719.5 202V216M720.5 203V219M721.5 199V214M722.5 200V215M723.5 197V214M724.5 201V212M725.5 199V214M726.5 200V215M727.5 199V218M728.5 199V218M729.5 198V218M730.5 204V217M731.5 200V219M732.5 200V220M733.5 201V218M734.5 198V221M735.5 199V216M736.5 193V218M737.5 199V218M738.5 201V213M739.5 201V214M740.5 195V216M741.5 193V215M742.5 198V214M743.5 196V219M744.5 190V221M745.5 193V226M746.5 194V222M747.5 194V221M748.5 190V220M749.5 195V223M750.5 194V226M751.5 195V227M752.5 196V223M753.5 193V229M754.5 192V223M755.5 191V223M756.5 185V223M757.5 192V221M758.5 192V218M759.5 195V216M760.5 199V224M761.5 195V226M762.5 193V222M763.5 195V223M764.5 190V230M765.5 191V234M766.5 191V224M767.5 197V219M768.5 199V219M769.5 197V226M770.5 195V230M771.5 196V222M772.5 196V226M773.5 194V230M774.5 189V226M775.5 191V228M776.5 192V220M777.5 196V218M778.5 197V219M779.5 196V212M780.5 200V213M781.5 198V212M782.5 203V212M783.5 204V214M784.5 200V216M785.5 204V215M786.5 205V216M787.5 202V213M788.5 204V215M789.5 204V215M790.5 201V212M791.5 202V215M792.5 205V211M793.5 204V212M794.5 203V215M795.5 205V211M796.5 204V212M797.5 200V211M798.5 205V214M799.5 204V213M800.5 204V214M801.5 204V215M802.5 203V216M803.5 201V217M804.5 199V222M805.5 200V216M806.5 200V213M807.5 204V212M808.5 200V211M809.5 204V213M810.5 202V213M811.5 204V211M812.5 203V212M813.5 199V212M814.5 203V213M815.5 205V217M816.5 203V214M817.5 207V213M818.5 203V214M819.5 203V214M820.5 206V213M821.5 202V215M822.5 205V212M823.5 202V212M824.5 203V212M825.5 201V210M826.5 196V210M827.5 202V216M828.5 198V212M829.5 196V211M830.5 201V213M831.5 202V214M832.5 203V215M833.5 204V216M834.5 203V215M835.5 199V218M836.5 204V222M837.5 204V218M838.5 200V218M839.5 200V214M840.5 203V214M841.5 200V212M842.5 199V212M843.5 193V217M844.5 195V221M845.5 191V220M846.5 182V229M847.5 192V225M848.5 196V224M849.5 199V218M850.5 200V219M851.5 204V216M852.5 204V221M853.5 205V218M854.5 205V214M855.5 205V217M856.5 207V216M857.5 205V213M858.5 204V212M859.5 204V211M860.5 200V210M861.5 203V209M862.5 203V210M863.5 202V209M864.5 201V210M865.5 201V214M866.5 202V211M867.5 204V212M868.5 205V214M869.5 206V214M870.5 207V215M871.5 206V217M872.5 207V214M873.5 208V214M874.5 206V214M875.5 205V213M876.5 205V212M877.5 203V210M878.5 203V211M879.5 201V209M880.5 199V213M881.5 202V209M882.5 202V211M883.5 204V214M884.5 204V212M885.5 205V212M886.5 203V214M887.5 202V216M888.5 203V217M889.5 202V218M890.5 197V222M891.5 201V219M892.5 200V219M893.5 200V218M894.5 197V214M895.5 200V220M896.5 195V217M897.5 201V212M898.5 195V213M899.5 200V211M900.5 203V211M901.5 201V213M902.5 204V214M903.5 204V213M904.5 204V213M905.5 204V214M906.5 205V214M907.5 205V214M908.5 203V212M909.5 206V212M910.5 206V212M911.5 203V210M912.5 200V212M913.5 200V212M914.5 203V212M915.5 203V212M916.5 199V214M917.5 204V212M918.5 204V212M919.5 203V213M920.5 205V213M921.5 206V212M922.5 205V212M923.5 207V211M924.5 207V211M925.5 206V211M926.5 206V212M927.5 203V211M928.5 205V214M929.5 203V215M930.5 203V212M931.5 203V212M932.5 203V212M933.5 205V215M934.5 206V215M935.5 205V212M936.5 206V212M937.5 206V213M938.5 205V212M939.5 205V214M940.5 205V217M941.5 205V215M942.5 205V212M943.5 204V213M944.5 204V212M945.5 203V211M946.5 201V210M947.5 203V211M948.5 203V213M949.5 199V211M950.5 204V214M951.5 205V212M952.5 205V211M953.5 205V213M954.5 206V213M955.5 207V213M956.5 205V211M957.5 207V212M958.5 208V213M959.5 206V211M960.5 206V211M961.5 205V211M962.5 203V211M963.5 205V210M964.5 205V209M965.5 204V209M966.5 205V211M967.5 205V211M968.5 205V210M969.5 203V211M970.5 206V213M971.5 206V213M972.5 204V213M973.5 208V211M974.5 206V213M975.5 207V212M976.5 207V213M977.5 205V212M978.5 205V213M979.5 200V217M980.5 200V216M981.5 202V220M982.5 199V215M983.5 199V217M984.5 199V216M985.5 199V216M986.5 199V216M987.5 199V217M988.5 200V216M989.5 202V215M990.5 202V219M991.5 201V215M992.5 198V214M993.5 204V215M994.5 202V220M995.5 199V216M996.5 200V217M997.5 199V217M998.5 196V216M999.5 202V216M1000.5 200V215M1001.5 198V213M1002.5 203V213M1003.5 200V216M1004.5 200V216M1005.5 200V216M1006.5 201V216M1007.5 197V220M1008.5 201V216M1009.5 201V214M1010.5 205V214M1011.5 204V211M1012.5 205V211M1013.5 205V212M1014.5 205V212M1015.5 204V212M1016.5 205V212M1017.5 204V214M1018.5 204V214M1019.5 206V211M1020.5 203V212M1021.5 204V212M1022.5 205V212M1023.5 205V213M1024.5 206V210M1025.5 205V211M1026.5 204V213M1027.5 204V213M1028.5 200V214M1029.5 204V212M1030.5 204V213M1031.5 202V212M1032.5 204V215M1033.5 205V212M1034.5 205V214M1035.5 206V217M1036.5 207V214M1037.5 204V213M1038.5 206V217M1039.5 206V213M1040.5 205V214M1041.5 207V212M1042.5 206V213M1043.5 202V213M1044.5 204V210M1045.5 204V210M1046.5 201V212M1047.5 201V210M1048.5 204V215M1049.5 202V212M1050.5 205V212M1051.5 203V213M1052.5 204V213M1053.5 205V214M1054.5 202V215M1055.5 207V214M1056.5 207V214M1057.5 206V217M1058.5 205V213M1059.5 205V214M1060.5 205V215M1061.5 204V211M1062.5 204V212M1063.5 203V211M1064.5 204V209M1065.5 203V211M1066.5 200V210M1067.5 202V210M1068.5 204V213M1069.5 202V213M1070.5 203V215M1071.5 205V215M1072.5 206V212M1073.5 205V216M1074.5 205V215M1075.5 203V216M1076.5 202V217M1077.5 201V217M1078.5 200V217M1079.5 201V214M1080.5 197V215M1081.5 195V215M1082.5 199V215M1083.5 198V217M1084.5 198V217M1085.5 196V219M1086.5 195V220M1087.5 196V221M1088.5 195V219M1089.5 193V225M1090.5 200V222M1091.5 200V221M1092.5 202V225M1093.5 197V222M1094.5 196V223M1095.5 194V224M1096.5 194V227M1097.5 183V230M1098.5 193V221M1099.5 195V220M1100.5 192V228M1101.5 191V234M1102.5 193V225M1103.5 184V221M1104.5 189V230M1105.5 194V223M1106.5 192V225M1107.5 192V225M1108.5 192V225M1109.5 191V226M1110.5 187V227M1111.5 192V226M1112.5 191V233M1113.5 191V230M1114.5 187V236M1115.5 188V226M1116.5 189V229M1117.5 194V223M1118.5 191V228M1119.5 198V225M1120.5 197V219M1121.5 190V221M1122.5 192V219M1123.5 196V221M1124.5 195V221M1125.5 195V228M1126.5 195V224M1127.5 199V223M1128.5 192V221M1129.5 193V221M1130.5 188V223M1131.5 190V226M1132.5 197V229M1133.5 200V222M1134.5 199V222M1135.5 199V217M1136.5 194V221M1137.5 192V223M1138.5 197V219M1139.5 197V221M1140.5 199V221M1141.5 198V216M1142.5 192V220M1143.5 191V220M1144.5 197V216M1145.5 200V217M1146.5 199V217M1147.5 205V217M1148.5 203V216M1149.5 203V212M1150.5 205V210M1151.5 204V211M1152.5 205V210M1153.5 203V211M1154.5 205V210M1155.5 206V211M1156.5 203V214M1157.5 204V216M1158.5 198V219M1159.5 191V226M1160.5 179V237M1161.5 189V228M1162.5 194V224M1163.5 197V230M1164.5 193V227M1165.5 192V220M1166.5 193V222M1167.5 184V222M1168.5 190V222M1169.5 186V219M1170.5 194V220M1171.5 193V227M1172.5 199V222M1173.5 199V219M1174.5 192V217M1175.5 193V218M1176.5 196V222M1177.5 199V225M1178.5 203V217M1179.5 206V215M1180.5 206V216M1181.5 206V211M1182.5 204V211M1183.5 205V212M1184.5 205V212M1185.5 204V212M1186.5 206V211M1187.5 202V211M1188.5 202V211M1189.5 202V214M1190.5 199V218M1191.5 198V215M1192.5 199V217M1193.5 197V224M1194.5 198V222M1195.5 196V224M1196.5 198V225M1197.5 199V219M1198.5 197V224M1199.5 196V223M1200.5 192V231M1201.5 199V227M1202.5 197V227M1203.5 194V219M1204.5 195V222M1205.5 199V219M1206.5 196V214M1207.5 192V222M1208.5 191V226M1209.5 200V217M1210.5 197V221M1211.5 197V222M1212.5 198V217M1213.5 201V218M1214.5 202V215M1215.5 201V218M1216.5 202V217M1217.5 200V216M1218.5 202V219M1219.5 201V219M1220.5 199V223M1221.5 203V219M1222.5 203V216M1223.5 201V214M1224.5 197V213M1225.5 198V213M1226.5 199V214M1227.5 198V217M1228.5 200V212M1229.5 199V213M1230.5 197V217M1231.5 202V214M1232.5 202V217M1233.5 201V222M1234.5 197V218M1235.5 201V219M1236.5 201V223M1237.5 201V217M1238.5 203V218M1239.5 202V222M1240.5 198V219M1241.5 189V225M1242.5 195V224M1243.5 194V221M1244.5 195V225M1245.5 192V217M1246.5 193V217M1247.5 199V217M1248.5 203V212M1249.5 204V212M1250.5 206V216M1251.5 205V215M1252.5 207V216M1253.5 203V213M1254.5 207V216M1255.5 206V215M1256.5 206V212M1257.5 206V213M1258.5 204V213M1259.5 203V211M1260.5 203V213M1261.5 200V211M1262.5 202V209M1263.5 204V210M1264.5 201V209M1265.5 203V210M1266.5 198V214M1267.5 204V213M1268.5 204V215M1269.5 203V216M1270.5 203V216M1271.5 201V220M1272.5 206V215M1273.5 206V215M1274.5 201V215M1275.5 205V213M1276.5 206V215M1277.5 205V213M1278.5 204V211M1279.5 202V212M1280.5 201V210M1281.5 203V210M1282.5 203V214M1283.5 204V211M1284.5 204V213M1285.5 205V213M1286.5 205V212M1287.5 203V212M1288.5 207V212M1289.5 207V212M1290.5 206V213M1291.5 205V212M1292.5 206V211M1293.5 206V210M1294.5 205V211M1295.5 204V211M1296.5 204V210M1297.5 205V214M1298.5 201V210M1299.5 203V213M1300.5 205V212M1301.5 204V211M1302.5 202V212M1303.5 205V215M1304.5 206V213M1305.5 205V213M1306.5 206V216M1307.5 203V214M1308.5 204V211M1309.5 207V215M1310.5 205V210M1311.5 203V213M1312.5 206V214M1313.5 204V212M1314.5 204V213M1315.5 205V210M1316.5 201V214M1317.5 204V213M1318.5 205V214M1319.5 204V215M1320.5 203V213M1321.5 205V213M1322.5 202V213M1323.5 205V212M1324.5 207V212M1325.5 206V213M1326.5 203V212M1327.5 203V210M1328.5 204V211M1329.5 202V211M1330.5 204V214M1331.5 203V211M1332.5 203V210M1333.5 204V211M1334.5 204V211M1335.5 204V211M1336.5 207V211M1337.5 207V213M1338.5 207V213M1339.5 207V213" fill="none" stroke="#0A0A8C" stroke-width="1" shape-rendering="crispEdges"/>
 <path d="M56.5 385V389M57.5 385V389M58.5 385V389M59.5 384V389M60.5 384V388M61.5 383V389M62.5 385V391M63.5 385V389M64.5 386V389M65.5 385V390M66.5 385V389M67.5 385V391M68.5 384V389M69.5 385V390M70.5 385V390M71.5 383V390M72.5 384V390M73.5 385V388M74.5 384V389M75.5 386V391M76.5 383V389M77.5 385V389M78.5 383V389M79.5 385V388M80.5 383V390M81.5 385V388M82.5 385V388M83.5 384V390M84.5 385V389M85.5 383V389M86.5 385V390M87.5 384V389M88.5 386V389M89.5 386V390M90.5 385V389M91.5 386V389M92.5 384V389M93.5 385V390M94.5 385V388M95.5 384V388M96.5 384V389M97.5 383V388M98.5 384V388M99.5 382V388M100.5 384V390M101.5 385V389M102.5 386V390M103.5 386V390M104.5 385V390M105.5 384V390M106.5 386V390M107.5 386V389M108.5 384V389M109.5 385V390M110.5 384V389M111.5 382V388M112.5 384V388M113.5 383V390M114.5 383V388M115.5 383V390M116.5 385V389M117.5 386V390M118.5 385V389M119.5 385V391M120.5 385V389M121.5 386V391M122.5 386V390M123.5 386V390M124.5 384V390M125.5 385V389M126.5 384V390M127.5 384V388M128.5 384V389M129.5 384V390M130.5 384V389M131.5 385V390M132.5 384V389M133.5 385V389M134.5 386V390M135.5 386V389M136.5 384V391M137.5 385V390M138.5 385V391M139.5 383V388M140.5 385V389M141.5 385V389M142.5 386V389M143.5 385V389M144.5 386V391M145.5 385V389M146.5 384V388M147.5 385V390M148.5 384V389M149.5 385V391M150.5 386V389M151.5 385V389M152.5 385V389M153.5 385V391M154.5 385V389M155.5 384V389M156.5 385V390M157.5 385V389M158.5 385V389M159.5 383V389M160.5 385V390M161.5 386V390M162.5 385V390M163.5 386V391M164.5 384V391M165.5 385V390M166.5 384V388M167.5 383V388M168.5 384V388M169.5 383V389M170.5 383V388M171.5 385V391M172.5 385V389M173.5 385V390M174.5 386V389M175.5 386V391M176.5 387V390M177.5 385V390M178.5 386V391M179.5 385V389M180.5 385V389M181.5 385V389M182.5 384V390M183.5 385V388M184.5 385V388M185.5 383V388M186.5 384V387M187.5 383V389M188.5 383V388M189.5 386V391M190.5 385V389M191.5 385V390M192.5 385V391M193.5 386V390M194.5 385V391M195.5 385V389M196.5 384V390M197.5 383V390M198.5 384V388M199.5 383V389M200.5 384V388M201.5 384V388M202.5 385V390M203.5 385V389M204.5 385V391M205.5 384V390M206.5 385V389M207.5 384V391M208.5 385V390M209.5 385V390M210.5 386V390M211.5 386V390M212.5 383V389M213.5 385V391M214.5 384V389M215.5 384V389M216.5 385V390M217.5 383V389M218.5 384V391M219.5 384V388M220.5 385V391M221.5 384V389M222.5 386V392M223.5 386V389M224.5 383V389M225.5 384V390M226.5 385V388M227.5 384V388M228.5 385V389M229.5 385V391M230.5 386V390M231.5 386V390M232.5 383V390M233.5 385V389M234.5 385V391M235.5 385V389M236.5 385V389M237.5 385V389M238.5 383V390M239.5 384V389M240.5 384V389M241.5 384V389M242.5 385V390M243.5 384V390M244.5 385V389M245.5 385V389M246.5 385V390M247.5 384V390M248.5 385V391M249.5 385V391M250.5 386V391M251.5 386V390M252.5 385V389M253.5 384V389M254.5 382V388M255.5 384V388M256.5 382V390M257.5 384V388M258.5 384V390M259.5 383V389M260.5 385V390M261.5 384V390M262.5 386V390M263.5 384V392M264.5 386V390M265.5 386V390M266.5 385V389M267.5 385V389M268.5 383V391M269.5 384V389M270.5 383V389M271.5 383V389M272.5 384V388M273.5 382V387M274.5 384V389M275.5 384V388M276.5 384V391M277.5 386V391M278.5 384V390M279.5 386V392M280.5 386V390M281.5 386V390M282.5 386V392M283.5 384V389M284.5 384V389M285.5 385V388M286.5 384V390M287.5 385V388M288.5 385V388M289.5 384V390M290.5 386V389M291.5 385V390M292.5 384V388M293.5 385V388M294.5 385V390M295.5 385V389M296.5 386V392M297.5 385V389M298.5 385V389M299.5 384V390M300.5 384V389M301.5 385V389M302.5 382V390M303.5 384V390M304.5 385V391M305.5 385V389M306.5 383V389M307.5 385V390M308.5 385V389M309.5 385V390M310.5 385V389M311.5 384V390M312.5 384V389M313.5 384V388M314.5 384V388M315.5 385V390M316.5 384V389M317.5 386V390M318.5 386V392M319.5 383V390M320.5 386V390M321.5 385V390M322.5 385V389M323.5 385V391M324.5 385V389M325.5 385V391M326.5 384V388M327.5 384V389M328.5 383V390M329.5 384V389M330.5 384V390M331.5 385V389M332.5 382V391M333.5 385V389M334.5 385V390M335.5 385V390M336.5 387V390M337.5 386V392M338.5 385V390M339.5 385V391M340.5 384V389M341.5 384V389M342.5 383V390M343.5 383V388M344.5 384V390M345.5 383V390M346.5 384V389M347.5 383V390M348.5 385V390M349.5 383V390M350.5 386V392M351.5 386V390M352.5 385V392M353.5 385V389M354.5 385V390M355.5 384V389M356.5 385V392M357.5 386V389M358.5 383V389M359.5 384V388M360.5 384V388M361.5 382V391M362.5 384V388M363.5 385V390M364.5 386V390M365.5 384V389M366.5 385V390M367.5 385V391M368.5 385V390M369.5 385V390M370.5 384V389M371.5 385V389M372.5 383V391M373.5 384V388M374.5 383V390M375.5 384V389M376.5 386V390M377.5 384V389M378.5 385V389M379.5 385V389M380.5 383V388M381.5 384V389M382.5 383V389M383.5 385V389M384.5 384V391M385.5 385V389M386.5 385V389M387.5 383V390M388.5 385V389M389.5 385V391M390.5 385V389M391.5 386V389M392.5 385V392M393.5 384V389M394.5 383V389M395.5 385V391M396.5 385V390M397.5 385V391M398.5 382V389M399.5 384V388M400.5 381V388M401.5 384V388M402.5 382V389M403.5 385V389M404.5 386V392M405.5 386V390M406.5 386V390M407.5 385V391M408.5 386V389M409.5 385V391M410.5 385V390M411.5 384V390M412.5 384V389M413.5 382V389M414.5 384V388M415.5 381V389M416.5 384V389M417.5 385V389M418.5 383V390M419.5 385V388M420.5 385V388M421.5 384V390M422.5 386V390M423.5 386V390M424.5 386V393M425.5 386V390M426.5 383V390M427.5 385V390M428.5 384V388M429.5 382V389M430.5 384V388M431.5 383V389M432.5 384V389M433.5 383V390M434.5 382V391M435.5 384V389M436.5 386V391M437.5 385V390M438.5 386V390M439.5 385V389M440.5 384V390M441.5 385V391M442.5 384V389M443.5 386V389M444.5 385V390M445.5 385V390M446.5 385V389M447.5 383V390M448.5 384V388M449.5 383V389M450.5 385V389M451.5 385V390M452.5 382V389M453.5 384V389M454.5 383V392M455.5 384V390M456.5 383V392M457.5 385V389M458.5 385V391M459.5 383V390M460.5 384V389M461.5 383V390M462.5 384V390M463.5 386V391M464.5 384V390M465.5 386V390M466.5 384V390M467.5 385V388M468.5 383V388M469.5 384V389M470.5 382V392M471.5 384V390M472.5 381V392M473.5 383V391M474.5 384V390M475.5 384V389M476.5 385V390M477.5 382V391M478.5 384V393M479.5 385V393M480.5 382V390M481.5 383V394M482.5 384V391M483.5 382V390M484.5 385V392M485.5 381V390M486.5 381V391M487.5 382V390M488.5 382V389M489.5 383V391M490.5 381V393M491.5 382V391M492.5 384V392M493.5 385V393M494.5 382V395M495.5 384V392M496.5 384V392M497.5 380V392M498.5 380V392M499.5 382V392M500.5 382V390M501.5 381V393M502.5 380V392M503.5 381V392M504.5 381V393M505.5 381V392M506.5 380V396M507.5 380V393M508.5 380V394M509.5 380V395M510.5 381V395M511.5 381V396M512.5 376V396M513.5 378V397M514.5 377V397M515.5 377V399M516.5 375V396M517.5 378V395M518.5 378V395M519.5 374V400M520.5 375V397M521.5 375V398M522.5 375V399M523.5 376V399M524.5 377V399M525.5 378V397M526.5 377V397M527.5 375V398M528.5 375V400M529.5 375V399M530.5 375V399M531.5 377V398M532.5 378V397M533.5 375V397M534.5 376V398M535.5 376V398M536.5 376V398M537.5 377V398M538.5 377V399M539.5 377V396M540.5 376V397M541.5 376V398M542.5 375V398M543.5 376V398M544.5 376V398M545.5 376V397M546.5 377V396M547.5 377V396M548.5 377V397M549.5 377V398M550.5 378V399M551.5 378V399M552.5 377V400M553.5 377V398M554.5 376V398M555.5 376V400M556.5 376V397M557.5 375V397M558.5 376V399M559.5 373V395M560.5 376V398M561.5 373V398M562.5 375V402M563.5 375V400M564.5 375V400M565.5 375V400M566.5 376V399M567.5 378V400M568.5 379V396M569.5 378V401M570.5 376V399M571.5 376V399M572.5 376V398M573.5 375V397M574.5 375V396M575.5 376V395M576.5 378V394M577.5 377V399M578.5 376V398M579.5 377V398M580.5 377V398M581.5 377V398M582.5 378V398M583.5 379V397M584.5 380V395M585.5 379V399M586.5 377V397M587.5 376V397M588.5 375V397M589.5 376V398M590.5 377V397M591.5 378V396M592.5 378V399M593.5 377V396M594.5 376V397M595.5 376V398M596.5 376V397M597.5 379V397M598.5 378V398M599.5 377V398M600.5 375V398M601.5 376V398M602.5 376V396M603.5 374V398M604.5 376V398M605.5 374V401M606.5 374V400M607.5 374V400M608.5 375V399M609.5 377V397M610.5 379V397M611.5 377V398M612.5 375V398M613.5 375V397M614.5 375V397M615.5 376V396M616.5 377V396M617.5 379V395M618.5 381V394M619.5 378V396M620.5 379V396M621.5 378V396M622.5 378V397M623.5 378V397M624.5 379V396M625.5 381V394M626.5 379V395M627.5 377V396M628.5 376V396M629.5 374V396M630.5 377V396M631.5 378V397M632.5 379V394M633.5 377V396M634.5 375V397M635.5 375V399M636.5 375V401M637.5 376V400M638.5 378V400M639.5 377V398M640.5 376V400M641.5 374V400M642.5 373V402M643.5 372V401M644.5 372V400M645.5 373V399M646.5 374V398M647.5 375V397M648.5 374V397M649.5 373V398M650.5 375V400M651.5 375V400M652.5 374V405M653.5 374V401M654.5 374V401M655.5 371V401M656.5 374V401M657.5 375V402M658.5 375V400M659.5 375V399M660.5 375V397M661.5 374V398M662.5 372V402M663.5 372V401M664.5 372V402M665.5 372V402M666.5 371V402M667.5 372V402M668.5 374V403M669.5 376V400M670.5 376V398M671.5 375V400M672.5 373V401M673.5 372V402M674.5 372V401M675.5 372V401M676.5 373V401M677.5 374V400M678.5 375V401M679.5 374V398M680.5 376V398M681.5 371V397M682.5 375V398M683.5 375V398M684.5 374V398M685.5 376V399M686.5 373V399M687.5 375V399M688.5 374V400M689.5 370V400M690.5 374V401M691.5 374V401M692.5 374V400M693.5 376V398M694.5 375V402M695.5 375V399M696.5 375V401M697.5 374V401M698.5 374V401M699.5 374V400M700.5 373V399M701.5 374V398M702.5 376V396M703.5 376V396M704.5 375V398M705.5 374V400M706.5 375V400M707.5 375V400M708.5 376V399M709.5 378V398M710.5 380V399M711.5 378V398M712.5 376V399M713.5 376V398M714.5 376V397M715.5 376V396M716.5 379V394M717.5 378V395M718.5 376V396M719.5 376V396M720.5 376V396M721.5 376V398M722.5 377V396M723.5 380V396M724.5 379V396M725.5 379V398M726.5 379V397M727.5 379V397M728.5 379V396M729.5 378V395M730.5 379V394M731.5 377V393M732.5 381V392M733.5 380V393M734.5 379V393M735.5 380V393M736.5 379V394M737.5 381V393M738.5 382V393M739.5 379V392M740.5 382V392M741.5 381V391M742.5 382V391M743.5 384V393M744.5 384V392M745.5 382V395M746.5 384V390M747.5 382V390M748.5 383V390M749.5 382V391M750.5 383V390M751.5 379V392M752.5 380V391M753.5 382V392M754.5 379V395M755.5 383V391M756.5 382V393M757.5 380V391M758.5 383V393M759.5 381V392M760.5 378V396M761.5 382V393M762.5 381V392M763.5 382V394M764.5 382V393M765.5 383V393M766.5 382V393M767.5 381V395M768.5 379V394M769.5 379V395M770.5 378V395M771.5 378V395M772.5 379V398M773.5 379V394M774.5 380V395M775.5 380V393M776.5 380V393M777.5 380V396M778.5 380V394M779.5 380V395M780.5 380V395M781.5 380V395M782.5 380V395M783.5 381V396M784.5 381V395M785.5 381V395M786.5 380V393M787.5 379V393M788.5 376V393M789.5 378V393M790.5 378V394M791.5 379V394M792.5 379V394M793.5 379V394M794.5 381V394M795.5 380V395M796.5 378V396M797.5 380V397M798.5 380V399M799.5 379V396M800.5 380V395M801.5 380V394M802.5 379V397M803.5 378V395M804.5 377V396M805.5 375V396M806.5 377V395M807.5 377V394M808.5 379V393M809.5 379V394M810.5 379V396M811.5 379V400M812.5 377V397M813.5 379V397M814.5 377V397M815.5 379V396M816.5 379V394M817.5 380V394M818.5 379V395M819.5 378V395M820.5 377V395M821.5 377V395M822.5 378V395M823.5 380V394M824.5 381V394M825.5 381V394M826.5 380V394M827.5 380V394M828.5 380V394M829.5 380V394M830.5 381V396M831.5 381V394M832.5 381V397M833.5 379V394M834.5 381V393M835.5 381V395M836.5 380V393M837.5 380V394M838.5 380V396M839.5 380V397M840.5 380V394M841.5 378V393M842.5 382V392M843.5 381V393M844.5 379V394M845.5 380V394M846.5 379V393M847.5 380V394M848.5 380V393M849.5 381V392M850.5 382V394M851.5 382V394M852.5 382V394M853.5 382V398M854.5 380V394M855.5 381V396M856.5 380V393M857.5 382V392M858.5 382V391M859.5 381V392M860.5 380V392M861.5 379V392M862.5 380V394M863.5 381V393M864.5 381V392M865.5 383V392M866.5 383V394M867.5 380V392M868.5 379V395M869.5 383V393M870.5 382V393M871.5 384V395M872.5 383V392M873.5 383V392M874.5 379V391M875.5 382V389M876.5 380V390M877.5 382V391M878.5 383V390M879.5 379V389M880.5 384V391M881.5 384V390M882.5 383V391M883.5 385V390M884.5 382V392M885.5 385V391M886.5 384V393M887.5 384V390M888.5 384V391M889.5 384V391M890.5 385V389M891.5 383V392M892.5 383V391M893.5 384V389M894.5 382V391M895.5 383V388M896.5 383V390M897.5 382V389M898.5 384V391M899.5 381V390M900.5 385V391M901.5 382V392M902.5 384V393M903.5 383V390M904.5 384V390M905.5 381V390M906.5 383V390M907.5 382V390M908.5 384V389M909.5 381V390M910.5 383V391M911.5 381V391M912.5 385V392M913.5 382V391M914.5 381V391M915.5 384V390M916.5 380V390M917.5 384V389M918.5 383V390M919.5 382V391M920.5 385V389M921.5 385V392M922.5 383V390M923.5 385V392M924.5 383V391M925.5 385V391M926.5 385V391M927.5 381V391M928.5 384V392M929.5 384V392M930.5 384V390M931.5 384V390M932.5 382V389M933.5 384V390M934.5 383V389M935.5 382V389M936.5 383V391M937.5 383V392M938.5 385V391M939.5 385V392M940.5 385V392M941.5 383V394M942.5 385V390M943.5 385V392M944.5 382V392M945.5 384V390M946.5 383V390M947.5 381V389M948.5 383V390M949.5 379V392M950.5 382V390M951.5 384V389M952.5 381V394M953.5 384V390M954.5 384V391M955.5 381V392M956.5 385V393M957.5 386V391M958.5 386V392M959.5 382V391M960.5 384V390M961.5 384V389M962.5 382V390M963.5 384V388M964.5 382V388M965.5 383V390M966.5 384V389M967.5 380V390M968.5 384V390M969.5 383V390M970.5 384V392M971.5 385V391M972.5 384V393M973.5 384V392M974.5 383V390M975.5 382V392M976.5 382V392M977.5 385V391M978.5 384V393M979.5 384V390M980.5 383V394M981.5 382V389M982.5 380V390M983.5 384V392M984.5 383V392M985.5 385V391M986.5 385V393M987.5 383V390M988.5 384V390M989.5 385V392M990.5 382V390M991.5 384V390M992.5 383V392M993.5 384V390M994.5 382V393M995.5 384V391M996.5 383V391M997.5 384V390M998.5 384V393M999.5 380V391M1000.5 382V391M1001.5 382V393M1002.5 382V390M1003.5 380V390M1004.5 382V393M1005.5 380V392M1006.5 384V393M1007.5 384V390M1008.5 381V393M1009.5 382V394M1010.5 383V393M1011.5 381V394M1012.5 384V394M1013.5 382V391M1014.5 383V394M1015.5 382V390M1016.5 384V392M1017.5 383V391M1018.5 384V390M1019.5 382V390M1020.5 382V389M1021.5 382V391M1022.5 380V389M1023.5 379V390M1024.5 383V394M1025.5 383V391M1026.5 385V392M1027.5 385V392M1028.5 383V393M1029.5 385V391M1030.5 384V393M1031.5 384V393M1032.5 381V390M1033.5 383V391M1034.5 381V389M1035.5 380V390M1036.5 384V388M1037.5 382V390M1038.5 384V390M1039.5 384V391M1040.5 381V390M1041.5 383V390M1042.5 384V390M1043.5 382V392M1044.5 384V391M1045.5 382V395M1046.5 385V392M1047.5 384V390M1048.5 383V391M1049.5 380V390M1050.5 383V393M1051.5 383V389M1052.5 383V391M1053.5 383V391M1054.5 382V389M1055.5 383V393M1056.5 380V390M1057.5 384V392M1058.5 384V395M1059.5 382V391M1060.5 384V392M1061.5 384V392M1062.5 382V390M1063.5 384V392M1064.5 384V390M1065.5 383V391M1066.5 383V393M1067.5 380V390M1068.5 384V390M1069.5 384V393M1070.5 382V390M1071.5 384V391M1072.5 384V391M1073.5 381V390M1074.5 383V393M1075.5 381V389M1076.5 384V391M1077.5 380V390M1078.5 383V393M1079.5 383V391M1080.5 381V391M1081.5 383V393M1082.5 382V392M1083.5 383V391M1084.5 385V392M1085.5 382V393M1086.5 383V392M1087.5 384V391M1088.5 379V393M1089.5 383V390M1090.5 382V389M1091.5 382V390M1092.5 381V390M1093.5 383V392M1094.5 382V390M1095.5 378V390M1096.5 383V395M1097.5 384V394M1098.5 381V394M1099.5 385V391M1100.5 382V394M1101.5 381V391M1102.5 382V393M1103.5 382V391M1104.5 382V395M1105.5 382V390M1106.5 381V391M1107.5 382V391M1108.5 379V390M1109.5 381V388M1110.5 381V390M1111.5 384V389M1112.5 383V391M1113.5 385V392M1114.5 382V391M1115.5 385V393M1116.5 385V391M1117.5 383V393M1118.5 385V391M1119.5 384V391M1120.5 382V390M1121.5 384V389M1122.5 382V392M1123.5 382V389M1124.5 384V390M1125.5 384V392M1126.5 383V390M1127.5 383V393M1128.5 380V391M1129.5 384V394M1130.5 385V391M1131.5 383V391M1132.5 385V394M1133.5 385V391M1134.5 383V394M1135.5 384V391M1136.5 382V391M1137.5 384V390M1138.5 383V391M1139.5 384V389M1140.5 382V391M1141.5 382V392M1142.5 384V390M1143.5 381V391M1144.5 385V390M1145.5 383V390M1146.5 384V390M1147.5 381V391M1148.5 383V392M1149.5 383V390M1150.5 382V391M1151.5 383V391M1152.5 384V393M1153.5 381V390M1154.5 385V392M1155.5 382V391M1156.5 382V390M1157.5 383V394M1158.5 383V391M1159.5 383V393M1160.5 384V390M1161.5 380V389M1162.5 383V392M1163.5 380V392M1164.5 381V392M1165.5 380V390M1166.5 384V392M1167.5 381V389M1168.5 383V391M1169.5 382V390M1170.5 383V391M1171.5 382V393M1172.5 384V392M1173.5 384V391M1174.5 385V391M1175.5 384V389M1176.5 383V389M1177.5 379V390M1178.5 383V389M1179.5 383V389M1180.5 382V390M1181.5 384V389M1182.5 384V389M1183.5 383V391M1184.5 385V392M1185.5 385V391M1186.5 385V391M1187.5 385V391M1188.5 381V390M1189.5 385V392M1190.5 384V391M1191.5 385V391M1192.5 385V390M1193.5 383V392M1194.5 382V389M1195.5 380V389M1196.5 381V390M1197.5 383V391M1198.5 384V390M1199.5 384V389M1200.5 385V390M1201.5 382V390M1202.5 385V390M1203.5 385V391M1204.5 382V390M1205.5 385V394M1206.5 383V390M1207.5 384V392M1208.5 384V389M1209.5 383V390M1210.5 383V390M1211.5 382V391M1212.5 381V390M1213.5 384V390M1214.5 383V391M1215.5 382V389M1216.5 382V389M1217.5 384V390M1218.5 382V391M1219.5 385V393M1220.5 381V390M1221.5 383V390M1222.5 384V392M1223.5 383V390M1224.5 383V390M1225.5 385V392M1226.5 384V390M1227.5 383V390M1228.5 382V391M1229.5 384V390M1230.5 383V391M1231.5 385V390M1232.5 385V392M1233.5 382V390M1234.5 384V388M1235.5 382V389M1236.5 383V389M1237.5 382V392M1238.5 384V389M1239.5 383V391M1240.5 386V391M1241.5 386V390M1242.5 384V390M1243.5 386V392M1244.5 386V390M1245.5 383V390M1246.5 385V392M1247.5 382V390M1248.5 382V390M1249.5 383V389M1250.5 384V393M1251.5 383V389M1252.5 384V390M1253.5 384V391M1254.5 383V389M1255.5 382V392M1256.5 383V389M1257.5 386V390M1258.5 385V391M1259.5 386V391M1260.5 386V391M1261.5 385V391M1262.5 384V390M1263.5 384V392M1264.5 382V390M1265.5 384V391M1266.5 384V389M1267.5 383V388M1268.5 384V389M1269.5 382V389M1270.5 384V390M1271.5 384V391M1272.5 384V391M1273.5 385V391M1274.5 384V390M1275.5 385V390M1276.5 384V391M1277.5 385V392M1278.5 384V394M1279.5 384V390M1280.5 383V392M1281.5 384V391M1282.5 383V390M1283.5 382V391M1284.5 384V390M1285.5 383V390M1286.5 384V391M1287.5 384V390M1288.5 382V390M1289.5 385V392M1290.5 383V390M1291.5 385V389M1292.5 385V392M1293.5 382V390M1294.5 384V391M1295.5 382V389M1296.5 384V390M1297.5 384V390M1298.5 385V390M1299.5 385V392M1300.5 382V392M1301.5 385V392M1302.5 384V389M1303.5 382V392M1304.5 384V391M1305.5 383V390M1306.5 384V390M1307.5 383V391M1308.5 382V389M1309.5 384V389M1310.5 383V393M1311.5 384V390M1312.5 383V391M1313.5 385V390M1314.5 385V390M1315.5 384V391M1316.5 385V390M1317.5 385V392M1318.5 385V391M1319.5 383V390M1320.5 383V391M1321.5 384V389M1322.5 383V388M1323.5 382V388M1324.5 383V390M1325.5 381V389M1326.5 385V390M1327.5 385V392M1328.5 385V391M1329.5 385V390M1330.5 384V391M1331.5 385V390M1332.5 384V391M1333.5 384V390M1334.5 384V390M1335.5 383V390M1336.5 382V389M1337.5 382V388M1338.5 384V390M1339.5 382V388" fill="none" stroke="#000000" stroke-width="1" shape-rendering="crispEdges"/>
 <path d="M56.5 566V570M57.5 565V570M58.5 565V571M59.5 564V570M60.5 565V570M61.5 566V570M62.5 565V570M63.5 564V571M64.5 565V571M65.5 565V571M66.5 565V570M67.5 565V570M68.5 564V570M69.5 564V571M70.5 565V571M71.5 565V571M72.5 566V571M73.5 565V571M74.5 564V570M75.5 564V570M76.5 563V570M77.5 564V569M78.5 563V572M79.5 562V572M80.5 563V574M81.5 563V572M82.5 562V571M83.5 562V573M84.5 563V573M85.5 563V573M86.5 563V574M87.5 562V573M88.5 562V573M89.5 562V573M90.5 561V573M91.5 562V574M92.5 564V571M93.5 562V573M94.5 562V573M95.5 560V573M96.5 562V573M97.5 564V570M98.5 563V572M99.5 562V572M100.5 563V572M101.5 563V572M102.5 565V572M103.5 565V570M104.5 565V571M105.5 565V570M106.5 565V570M107.5 565V570M108.5 565V570M109.5 565V569M110.5 565V570M111.5 564V571M112.5 563V571M113.5 564V573M114.5 565V570M115.5 565V570M116.5 564V571M117.5 564V573M118.5 564V572M119.5 565V572M120.5 565V570M121.5 565V571M122.5 563V570M123.5 563V572M124.5 564V570M125.5 565V570M126.5 565V570M127.5 565V570M128.5 565V570M129.5 565V570M130.5 564V569M131.5 565V570M132.5 564V572M133.5 564V572M134.5 564V572M135.5 564V572M136.5 564V570M137.5 564V570M138.5 563V571M139.5 563V572M140.5 564V572M141.5 564V573M142.5 565V571M143.5 564V571M144.5 563V571M145.5 563V571M146.5 563V571M147.5 564V572M148.5 565V571M149.5 565V571M150.5 564V572M151.5 563V572M152.5 563V572M153.5 564V571M154.5 565V572M155.5 566V570M156.5 563V571M157.5 564V571M158.5 564V570M159.5 563V571M160.5 564V570M161.5 563V571M162.5 565V571M163.5 566V570M164.5 564V571M165.5 564V572M166.5 564V572M167.5 564V571M168.5 564V570M169.5 565V570M170.5 565V570M171.5 565V572M172.5 565V570M173.5 565V570M174.5 565V570M175.5 565V570M176.5 565V570M177.5 565V570M178.5 562V571M179.5 564V571M180.5 564V573M181.5 563V570M182.5 564V571M183.5 563V572M184.5 563V572M185.5 563V572M186.5 564V571M187.5 565V571M188.5 563V572M189.5 563V572M190.5 563V572M191.5 563V571M192.5 563V569M193.5 562V572M194.5 563V572M195.5 562V573M196.5 564V572M197.5 565V572M198.5 563V572M199.5 563V572M200.5 561V572M201.5 564V571M202.5 564V572M203.5 562V573M204.5 561V573M205.5 562V572M206.5 563V570M207.5 563V570M208.5 564V571M209.5 564V571M210.5 565V571M211.5 566V571M212.5 565V569M213.5 565V570M214.5 564V570M215.5 565V570M216.5 565V570M217.5 567V571M218.5 566V570M219.5 565V570M220.5 565V570M221.5 565V570M222.5 565V569M223.5 565V569M224.5 565V570M225.5 565V570M226.5 565V569M227.5 565V570M228.5 564V569M229.5 565V569M230.5 566V569M231.5 565V570M232.5 566V571M233.5 566V571M234.5 565V570M235.5 565V569M236.5 565V570M237.5 564V570M238.5 565V570M239.5 565V570M240.5 565V569M241.5 565V570M242.5 565V570M243.5 565V570M244.5 565V570M245.5 565V570M246.5 565V570M247.5 566V570M248.5 566V570M249.5 565V569M250.5 565V570M251.5 566V570M252.5 566V570M253.5 565V570M254.5 565V570M255.5 565V570M256.5 566V569M257.5 566V570M258.5 565V570M259.5 565V570M260.5 565V570M261.5 565V570M262.5 565V569M263.5 565V570M264.5 565V571M265.5 565V571M266.5 564V571M267.5 565V571M268.5 566V570M269.5 565V570M270.5 564V570M271.5 564V571M272.5 564V570M273.5 565V570M274.5 565V569M275.5 565V569M276.5 565V569M277.5 565V570M278.5 566V571M279.5 566V570M280.5 566V571M281.5 565V570M282.5 566V569M283.5 565V569M284.5 565V569M285.5 565V570M286.5 565V570M287.5 565V571M288.5 565V570M289.5 566V569M290.5 565V570M291.5 565V569M292.5 565V570M293.5 565V570M294.5 565V570M295.5 566V570M296.5 566V571M297.5 565V569M298.5 565V570M299.5 565V570M300.5 565V571M301.5 566V570M302.5 566V570M303.5 565V570M304.5 564V570M305.5 564V570M306.5 564V569M307.5 564V569M308.5 565V570M309.5 565V571M310.5 565V571M311.5 565V570M312.5 566V570M313.5 565V570M314.5 565V571M315.5 565V571M316.5 565V570M317.5 565V572M318.5 563V571M319.5 563V572M320.5 562V571M321.5 564V570M322.5 561V572M323.5 562V573M324.5 562V573M325.5 563V573M326.5 564V570M327.5 563V572M328.5 563V572M329.5 563V571M330.5 564V571M331.5 565V570M332.5 564V571M333.5 564V571M334.5 564V571M335.5 565V571M336.5 565V570M337.5 565V570M338.5 564V570M339.5 564V570M340.5 564V570M341.5 565V570M342.5 565V570M343.5 565V570M344.5 565V570M345.5 565V569M346.5 565V569M347.5 566V570M348.5 565V571M349.5 566V571M350.5 565V570M351.5 564V570M352.5 564V570M353.5 564V570M354.5 565V570M355.5 565V570M356.5 565V571M357.5 565V571M358.5 565V571M359.5 565V570M360.5 565V569M361.5 564V570M362.5 565V570M363.5 565V571M364.5 565V571M365.5 565V570M366.5 566V570M367.5 565V570M368.5 564V570M369.5 564V570M370.5 565V570M371.5 565V570M372.5 566V570M373.5 566V570M374.5 565V569M375.5 564V570M376.5 565V569M377.5 565V570M378.5 565V570M379.5 565V571M380.5 565V571M381.5 566V570M382.5 566V570M383.5 564V570M384.5 564V571M385.5 564V571M386.5 564V571M387.5 565V570M388.5 565V570M389.5 564V570M390.5 564V570M391.5 564V571M392.5 565V570M393.5 566V570M394.5 565V570M395.5 565V570M396.5 566V571M397.5 565V570M398.5 565V570M399.5 565V570M400.5 565V569M401.5 565V570M402.5 565V570M403.5 566V570M404.5 565V570M405.5 565V570M406.5 565V570M407.5 564V570M408.5 565V570M409.5 565V569M410.5 565V570M411.5 565V571M412.5 564V571M413.5 565V570M414.5 565V570M415.5 566V570M416.5 564V570M417.5 565V570M418.5 564V570M419.5 566V570M420.5 565V570M421.5 564V570M422.5 564V570M423.5 563V569M424.5 564V571M425.5 564V572M426.5 565V572M427.5 565V571M428.5 565V571M429.5 564V571M430.5 563V571M431.5 564V571M432.5 565V570M433.5 564V571M434.5 564V571M435.5 564V571M436.5 564V570M437.5 564V570M438.5 564V571M439.5 564V571M440.5 565V571M441.5 565V572M442.5 563V573M443.5 563V572M444.5 562V572M445.5 563V572M446.5 564V571M447.5 563V572M448.5 564V573M449.5 563V573M450.5 563V572M451.5 564V570M452.5 562V572M453.5 562V572M454.5 563V572M455.5 563V572M456.5 565V572M457.5 563V572M458.5 563V572M459.5 563V572M460.5 563V573M461.5 564V571M462.5 565V571M463.5 564V573M464.5 563V572M465.5 564V571M466.5 564V570M467.5 564V570M468.5 563V571M469.5 564V570M470.5 564V570M471.5 563V572M472.5 563V572M473.5 563V572M474.5 565V571M475.5 563V572M476.5 563V573M477.5 563V573M478.5 563V573M479.5 563V572M480.5 564V571M481.5 563V574M482.5 563V573M483.5 562V572M484.5 562V572M485.5 564V571M486.5 563V571M487.5 562V573M488.5 562V573M489.5 562V573M490.5 562V574M491.5 564V571M492.5 564V571M493.5 563V572M494.5 561V572M495.5 564V572M496.5 564V572M497.5 564V572M498.5 564V571M499.5 564V571M500.5 563V570M501.5 563V572M502.5 564V571M503.5 563V572M504.5 562V573M505.5 562V572M506.5 560V571M507.5 564V571M508.5 563V572M509.5 563V575M510.5 563V575M511.5 564V573M512.5 562V571M513.5 563V572M514.5 563V574M515.5 563V571M516.5 564V573M517.5 565V572M518.5 565V571M519.5 561V571M520.5 564V570M521.5 562V571M522.5 562V571M523.5 563V572M524.5 562V571M525.5 565V571M526.5 564V572M527.5 563V573M528.5 562V574M529.5 563V572M530.5 563V573M531.5 564V572M532.5 563V573M533.5 563V573M534.5 563V571M535.5 564V572M536.5 563V570M537.5 563V571M538.5 563V571M539.5 562V571M540.5 565V571M541.5 564V572M542.5 561V571M543.5 565V571M544.5 564V572M545.5 562V573M546.5 563V573M547.5 564V571M548.5 565V570M549.5 564V571M550.5 563V574M551.5 563V572M552.5 564V571M553.5 565V570M554.5 564V571M555.5 563V574M556.5 565V570M557.5 561V574M558.5 564V571M559.5 563V571M560.5 564V571M561.5 561V572M562.5 562V576M563.5 562V573M564.5 563V573M565.5 565V572M566.5 562V573M567.5 562V573M568.5 561V573M569.5 561V573M570.5 562V571M571.5 562V574M572.5 562V574M573.5 560V574M574.5 561V574M575.5 559V574M576.5 560V573M577.5 561V574M578.5 561V575M579.5 561V576M580.5 561V575M581.5 560V573M582.5 559V576M583.5 560V573M584.5 560V576M585.5 560V575M586.5 564V574M587.5 563V578M588.5 562V574M589.5 562V573M590.5 562V575M591.5 562V577M592.5 561V577M593.5 561V574M594.5 563V575M595.5 563V573M596.5 561V575M597.5 561V578M598.5 560V576M599.5 557V577M600.5 561V572M601.5 561V574M602.5 559V574M603.5 562V573M604.5 561V573M605.5 563V571M606.5 562V572M607.5 558V573M608.5 562V575M609.5 562V574M610.5 562V574M611.5 565V572M612.5 563V572M613.5 562V573M614.5 561V573M615.5 562V574M616.5 561V572M617.5 561V573M618.5 563V575M619.5 562V575M620.5 563V572M621.5 562V577M622.5 560V579M623.5 561V576M624.5 560V581M625.5 558V575M626.5 560V573M627.5 559V576M628.5 552V575M629.5 556V577M630.5 560V580M631.5 562V573M632.5 558V575M633.5 556V581M634.5 554V577M635.5 559V579M636.5 557V572M637.5 560V573M638.5 559V579M639.5 561V578M640.5 562V573M641.5 564V574M642.5 563V573M643.5 561V573M644.5 563V573M645.5 564V571M646.5 561V574M647.5 562V573M648.5 562V573M649.5 562V573M650.5 563V572M651.5 564V570M652.5 562V575M653.5 560V573M654.5 560V573M655.5 563V573M656.5 565V572M657.5 563V572M658.5 562V572M659.5 563V572M660.5 563V572M661.5 564V570M662.5 564V575M663.5 561V572M664.5 565V573M665.5 564V571M666.5 562V576M667.5 563V571M668.5 564V573M669.5 563V571M670.5 558V574M671.5 563V572M672.5 560V575M673.5 560V576M674.5 564V572M675.5 562V571M676.5 563V571M677.5 564V571M678.5 564V572M679.5 562V574M680.5 563V578M681.5 560V575M682.5 560V575M683.5 557V578M684.5 560V572M685.5 560V572M686.5 561V575M687.5 560V577M688.5 556V577M689.5 561V574M690.5 564V573M691.5 561V574M692.5 561V577M693.5 561V575M694.5 561V575M695.5 555V575M696.5 562V572M697.5 560V574M698.5 560V574M699.5 560V574M700.5 556V574M701.5 559V573M702.5 556V575M703.5 561V574M704.5 558V578M705.5 559V575M706.5 558V576M707.5 562V573M708.5 561V575M709.5 561V574M710.5 563V573M711.5 563V575M712.5 560V574M713.5 561V576M714.5 562V573M715.5 562V570M716.5 561V573M717.5 561V573M718.5 562V574M719.5 561V573M720.5 562V571M721.5 559V573M722.5 561V573M723.5 561V575M724.5 562V574M725.5 564V572M726.5 561V573M727.5 561V574M728.5 559V576M729.5 553V575M730.5 558V573M731.5 560V571M732.5 562V572M733.5 562V574M734.5 562V574M735.5 562V574M736.5 562V572M737.5 563V575M738.5 564V571M739.5 564V574M740.5 564V572M741.5 563V573M742.5 561V573M743.5 559V572M744.5 563V574M745.5 563V570M746.5 563V571M747.5 563V573M748.5 562V574M749.5 562V576M750.5 563V572M751.5 563V571M752.5 563V573M753.5 562V573M754.5 562V573M755.5 563V572M756.5 565V571M757.5 563V574M758.5 560V575M759.5 561V579M760.5 561V576M761.5 556V576M762.5 554V582M763.5 559V576M764.5 561V574M765.5 562V572M766.5 562V573M767.5 561V573M768.5 561V574M769.5 561V574M770.5 557V576M771.5 561V573M772.5 561V573M773.5 562V575M774.5 562V574M775.5 561V574M776.5 563V572M777.5 563V574M778.5 563V572M779.5 562V574M780.5 562V572M781.5 558V573M782.5 562V571M783.5 564V571M784.5 561V571M785.5 564V573M786.5 564V574M787.5 564V572M788.5 564V571M789.5 560V571M790.5 564V575M791.5 563V572M792.5 564V571M793.5 563V572M794.5 564V571M795.5 565V572M796.5 560V571M797.5 563V572M798.5 562V570M799.5 563V573M800.5 558V572M801.5 560V574M802.5 559V574M803.5 562V574M804.5 564V573M805.5 562V574M806.5 561V574M807.5 558V574M808.5 562V575M809.5 562V574M810.5 563V571M811.5 562V573M812.5 562V573M813.5 561V572M814.5 561V572M815.5 562V572M816.5 562V573M817.5 563V574M818.5 563V574M819.5 562V573M820.5 562V573M821.5 563V570M822.5 562V573M823.5 562V573M824.5 562V573M825.5 562V573M826.5 563V573M827.5 563V572M828.5 562V573M829.5 562V573M830.5 562V573M831.5 564V572M832.5 563V572M833.5 562V573M834.5 562V573M835.5 564V571M836.5 563V571M837.5 562V573M838.5 562V573M839.5 563V573M840.5 565V572M841.5 563V573M842.5 562V573M843.5 562V573M844.5 562V573M845.5 562V571M846.5 563V571M847.5 560V572M848.5 562V573M849.5 562V573M850.5 562V572M851.5 563V572M852.5 563V572M853.5 562V573M854.5 562V573M855.5 563V573M856.5 564V572M857.5 565V571M858.5 565V572M859.5 564V571M860.5 563V571M861.5 563V571M862.5 563V571M863.5 563V572M864.5 564V573M865.5 565V571M866.5 564V571M867.5 563V573M868.5 562V572M869.5 562V572M870.5 563V573M871.5 564V570M872.5 563V572M873.5 563V573M874.5 563V573M875.5 563V572M876.5 564V571M877.5 562V572M878.5 562V574M879.5 562V573M880.5 561V572M881.5 564V570M882.5 562V572M883.5 562V572M884.5 562V572M885.5 563V573M886.5 564V571M887.5 563V573M888.5 563V573M889.5 562V573M890.5 562V572M891.5 563V571M892.5 563V571M893.5 562V573M894.5 562V574M895.5 562V573M896.5 562V573M897.5 564V570M898.5 563V571M899.5 562V572M900.5 562V573M901.5 563V573M902.5 563V573M903.5 563V571M904.5 561V570M905.5 563V573M906.5 561V572M907.5 563V572M908.5 563V572M909.5 560V572M910.5 564V574M911.5 562V571M912.5 559V574M913.5 563V573M914.5 563V576M915.5 561V572M916.5 557V575M917.5 562V572M918.5 564V573M919.5 564V574M920.5 564V572M921.5 563V573M922.5 562V573M923.5 563V573M924.5 564V571M925.5 560V574M926.5 560V577M927.5 558V575M928.5 557V575M929.5 556V575M930.5 558V572M931.5 557V574M932.5 560V577M933.5 556V574M934.5 562V574M935.5 563V573M936.5 562V575M937.5 561V573M938.5 559V573M939.5 562V573M940.5 561V573M941.5 565V572M942.5 562V573M943.5 562V575M944.5 561V573M945.5 562V572M946.5 563V571M947.5 562V572M948.5 562V573M949.5 562V573M950.5 562V573M951.5 564V571M952.5 563V572M953.5 562V573M954.5 562V573M955.5 563V573M956.5 565V573M957.5 563V573M958.5 562V573M959.5 562V574M960.5 563V570M961.5 563V571M962.5 562V572M963.5 562V573M964.5 563V573M965.5 564V571M966.5 564V572M967.5 562V573M968.5 562V573M969.5 562V573M970.5 562V572M971.5 565V571M972.5 564V572M973.5 562V573M974.5 562V574M975.5 563V571M976.5 564V571M977.5 565V571M978.5 565V571M979.5 565V571M980.5 563V571M981.5 564V572M982.5 563V571M983.5 563V571M984.5 563V571M985.5 564V571M986.5 565V571M987.5 563V572M988.5 563V573M989.5 562V573M990.5 563V572M991.5 565V572M992.5 562V571M993.5 562V573M994.5 562V572M995.5 561V572M996.5 564V570M997.5 563V572M998.5 562V573M999.5 562V573M1000.5 563V572M1001.5 562V572M1002.5 563V573M1003.5 562V573M1004.5 563V573M1005.5 562V573M1006.5 564V573M1007.5 562V572M1008.5 562V572M1009.5 562V572M1010.5 562V573M1011.5 563V572M1012.5 564V571M1013.5 561V573M1014.5 562V572M1015.5 561V572M1016.5 562V573M1017.5 563V571M1018.5 563V572M1019.5 563V573M1020.5 562V573M1021.5 562V574M1022.5 562V572M1023.5 562V571M1024.5 565V573M1025.5 564V572M1026.5 563V573M1027.5 563V572M1028.5 562V572M1029.5 563V571M1030.5 563V570M1031.5 563V571M1032.5 564V571M1033.5 564V573M1034.5 564V572M1035.5 564V573M1036.5 565V571M1037.5 564V570M1038.5 564V570M1039.5 564V571M1040.5 565V571M1041.5 565V571M1042.5 564V571M1043.5 562V571M1044.5 563V569M1045.5 563V571M1046.5 563V572M1047.5 563V573M1048.5 563V573M1049.5 564V572M1050.5 564V571M1051.5 563V572M1052.5 562V572M1053.5 563V572M1054.5 563V572M1055.5 564V571M1056.5 563V573M1057.5 563V572M1058.5 563V572M1059.5 563V573M1060.5 563V572M1061.5 564V570M1062.5 563V572M1063.5 563V572M1064.5 563V572M1065.5 563V572M1066.5 563V571M1067.5 563V572M1068.5 563V572M1069.5 563V572M1070.5 564V572M1071.5 564V573M1072.5 564V571M1073.5 563V572M1074.5 563V572M1075.5 563V572M1076.5 564V569M1077.5 564V570M1078.5 563V571M1079.5 563V572M1080.5 565V571M1081.5 565V571M1082.5 563V573M1083.5 562V573M1084.5 562V573M1085.5 564V572M1086.5 564V571M1087.5 562V573M1088.5 562V573M1089.5 562V573M1090.5 563V571M1091.5 563V570M1092.5 560V572M1093.5 562V573M1094.5 563V573M1095.5 563V575M1096.5 565V572M1097.5 564V572M1098.5 564V570M1099.5 564V571M1100.5 564V570M1101.5 563V572M1102.5 565V572M1103.5 564V575M1104.5 563V573M1105.5 563V572M1106.5 562V571M1107.5 563V570M1108.5 562V572M1109.5 560V573M1110.5 562V573M1111.5 563V577M1112.5 563V572M1113.5 561V576M1114.5 558V578M1115.5 560V575M1116.5 561V575M1117.5 563V574M1118.5 557V580M1119.5 558V576M1120.5 553V574M1121.5 559V573M1122.5 555V575M1123.5 555V579M1124.5 559V579M1125.5 554V576M1126.5 559V575M1127.5 554V582M1128.5 554V578M1129.5 557V579M1130.5 551V577M1131.5 555V576M1132.5 560V580M1133.5 558V578M1134.5 557V578M1135.5 557V578M1136.5 557V578M1137.5 560V578M1138.5 560V580M1139.5 557V578M1140.5 557V578M1141.5 557V578M1142.5 557V580M1143.5 559V575M1144.5 561V578M1145.5 558V578M1146.5 557V583M1147.5 557V578M1148.5 557V578M1149.5 559V578M1150.5 560V575M1151.5 562V577M1152.5 556V578M1153.5 558V579M1154.5 557V580M1155.5 558V583M1156.5 560V576M1157.5 557V573M1158.5 558V576M1159.5 559V575M1160.5 554V574M1161.5 556V573M1162.5 562V573M1163.5 558V578M1164.5 562V574M1165.5 562V577M1166.5 560V575M1167.5 557V577M1168.5 555V576M1169.5 553V574M1170.5 561V578M1171.5 558V578M1172.5 558V578M1173.5 557V581M1174.5 558V577M1175.5 561V577M1176.5 557V576M1177.5 558V580M1178.5 559V577M1179.5 559V576M1180.5 560V577M1181.5 560V573M1182.5 559V576M1183.5 558V581M1184.5 559V576M1185.5 555V576M1186.5 560V579M1187.5 560V577M1188.5 559V579M1189.5 555V575M1190.5 557V575M1191.5 559V577M1192.5 561V574M1193.5 559V575M1194.5 560V576M1195.5 560V576M1196.5 563V574M1197.5 561V574M1198.5 560V575M1199.5 560V576M1200.5 562V573M1201.5 560V574M1202.5 561V579M1203.5 560V575M1204.5 561V573M1205.5 561V571M1206.5 560V573M1207.5 561V574M1208.5 558V574M1209.5 560V573M1210.5 564V574M1211.5 563V574M1212.5 559V575M1213.5 560V576M1214.5 563V573M1215.5 561V572M1216.5 562V572M1217.5 564V572M1218.5 564V571M1219.5 563V574M1220.5 563V573M1221.5 560V575M1222.5 562V574M1223.5 562V574M1224.5 559V573M1225.5 557V574M1226.5 562V574M1227.5 560V571M1228.5 563V577M1229.5 562V574M1230.5 560V574M1231.5 561V574M1232.5 562V573M1233.5 561V574M1234.5 563V573M1235.5 562V574M1236.5 561V572M1237.5 564V574M1238.5 562V574M1239.5 562V573M1240.5 563V574M1241.5 560V573M1242.5 563V573M1243.5 561V574M1244.5 561V574M1245.5 561V572M1246.5 564V572M1247.5 561V573M1248.5 562V574M1249.5 562V578M1250.5 560V574M1251.5 559V572M1252.5 562V575M1253.5 561V573M1254.5 561V574M1255.5 561V574M1256.5 562V574M1257.5 563V571M1258.5 562V573M1259.5 561V575M1260.5 559V573M1261.5 561V573M1262.5 561V574M1263.5 562V572M1264.5 564V575M1265.5 561V574M1266.5 562V575M1267.5 561V577M1268.5 561V573M1269.5 561V573M1270.5 562V573M1271.5 563V572M1272.5 562V573M1273.5 561V573M1274.5 561V575M1275.5 561V575M1276.5 563V575M1277.5 563V571M1278.5 563V573M1279.5 560V573M1280.5 562V577M1281.5 561V574M1282.5 561V571M1283.5 562V573M1284.5 560V571M1285.5 564V576M1286.5 561V572M1287.5 564V574M1288.5 559V574M1289.5 563V571M1290.5 563V572M1291.5 562V573M1292.5 559V573M1293.5 561V573M1294.5 561V573M1295.5 560V571M1296.5 560V574M1297.5 561V574M1298.5 559V574M1299.5 561V574M1300.5 562V573M1301.5 563V572M1302.5 562V573M1303.5 562V573M1304.5 563V572M1305.5 563V572M1306.5 565V570M1307.5 563V571M1308.5 563V572M1309.5 563V571M1310.5 563V572M1311.5 566V571M1312.5 564V572M1313.5 564V572M1314.5 563V573M1315.5 563V571M1316.5 565V569M1317.5 564V571M1318.5 564V572M1319.5 563V572M1320.5 565V570M1321.5 564V570M1322.5 564V572M1323.5 563V571M1324.5 564V571M1325.5 565V570M1326.5 565V571M1327.5 564V571M1328.5 564V572M1329.5 564V570M1330.5 565V570M1331.5 565V570M1332.5 565V571M1333.5 566V571M1334.5 565V571M1335.5 566V570M1336.5 565V570M1337.5 564V569M1338.5 565V569M1339.5 565V570" fill="none" stroke="#FF0000" stroke-width="1" shape-rendering="crispEdges"/>
 </g>
</svg>




<!-- H SCROLLBAR -->
<div class="abs" style="left:37px;top:702px;width:1307px;height:14px;background:#F6F5EE"></div>
<div class="abs" style="left:37px;top:702px;width:15px;height:12px;background:#ECE9D8;border-top:1px solid #fff;border-left:1px solid #fff;border-right:1px solid #716F64;border-bottom:1px solid #716F64;box-shadow:inset -1px -1px 0 #ACA899"></div>
<div class="abs" style="left:1328px;top:702px;width:14px;height:12px;background:#ECE9D8;border-top:1px solid #fff;border-left:1px solid #fff;border-right:1px solid #716F64;border-bottom:1px solid #716F64;box-shadow:inset -1px -1px 0 #ACA899"></div>
<div class="abs" style="left:1144px;top:702px;width:15px;height:12px;background:#ECE9D8;border-top:1px solid #fff;border-left:1px solid #fff;border-right:1px solid #716F64;border-bottom:1px solid #716F64;box-shadow:inset -1px -1px 0 #ACA899"></div>
<svg class="abs" style="left:37px;top:702px" width="1310" height="15"><path d="M10 3.500V9.500L6 6.500Z" fill="#000"/><path d="M1296 3.500V9.500L1300 6.500Z" fill="#000"/></svg>

<!-- STATUS BAR -->
<div class="abs" style="left:0;top:718px;width:1366px;height:1px;background:#fff"></div>
<div class="abs" style="left:0;top:719px;width:1366px;height:19px;background:#ECE9D8"></div>
<div class="abs" style="left:802px;top:721px;width:461px;height:15px;border-top:1px solid #ACA899;border-left:1px solid #ACA899;border-right:1px solid #fff;border-bottom:1px solid #fff"></div>
<div class="abs" style="left:1267px;top:721px;width:60px;height:15px;border-top:1px solid #ACA899;border-left:1px solid #ACA899;border-bottom:1px solid #fff"></div>
<div class="abs" style="left:1281px;top:722px;width:81px;height:13px;border:1px solid #000;background:#FFFFE1"></div>

<div class="tl" style="top:5.10px;font-size:13px;line-height:16px;font-weight:bold;font-style:normal;color:#fff;"><span style="left:21.60px;letter-spacing:0.631px">09210705_09261102</span> <span style="left:159.60px;transform:scaleX(1.5655)">-</span> <span style="left:172.20px;letter-spacing:0.046px">none</span> <span style="left:209.60px;transform:scaleX(1.5655)">-</span> <span style="left:222.60px;letter-spacing:0.262px">default</span> <span style="left:272.10px;transform:scaleX(1.5655)">-</span> <span style="left:285.60px;transform:scaleX(0.9876)">LogWorx</span></div><div class="tl" style="top:83.04px;font-size:12px;line-height:15px;font-weight:normal;font-style:normal;color:#000;"><span style="left:10.71px;transform:scaleX(0.9663)">T2-T1=</span> <span style="left:52.36px;transform:scaleX(0.8472)">0:0:0.000</span></div><div class="tl" style="top:83.04px;font-size:12px;line-height:15px;font-weight:normal;font-style:normal;color:#000;"><span style="left:134.14px;transform:scaleX(0.9077)">Speed</span> <span style="left:173.25px;transform:scaleX(0.8837)">=</span> <span style="left:190.33px;transform:scaleX(0.9186)">100</span></div><div class="tl" style="top:83.04px;font-size:12px;line-height:15px;font-weight:normal;font-style:normal;color:#000;"><span style="left:256.03px;transform:scaleX(0.9299)">Display</span> <span style="left:298.45px;transform:scaleX(0.8653)">Time</span> <span style="left:326.96px;transform:scaleX(0.8410)">=</span> <span style="left:337.24px;transform:scaleX(0.8969)">120.000s</span></div><div class="tl" style="top:82.04px;font-size:12px;line-height:15px;font-weight:normal;font-style:normal;color:#000;"><span style="left:420.34px;transform:scaleX(0.9036)">Mark</span></div><div class="tl" style="top:83.14px;font-size:12px;line-height:15px;font-weight:normal;font-style:normal;color:#000;"><span style="left:1307.21px;transform:scaleX(0.9860)">START</span></div><div class="tl" style="top:686.04px;font-size:12px;line-height:15px;font-weight:normal;font-style:normal;color:#000;"><span style="left:18.46px;transform:scaleX(0.8599)">107:28:17.750</span></div><div class="tl" style="top:686.04px;font-size:12px;line-height:15px;font-weight:normal;font-style:normal;color:#000;"><span style="left:339.46px;transform:scaleX(0.8599)">107:28:47.750</span></div><div class="tl" style="top:686.04px;font-size:12px;line-height:15px;font-weight:normal;font-style:normal;color:#000;"><span style="left:660.46px;transform:scaleX(0.8599)">107:29:17.750</span></div><div class="tl" style="top:686.04px;font-size:12px;line-height:15px;font-weight:normal;font-style:normal;color:#000;"><span style="left:981.46px;transform:scaleX(0.8599)">107:29:47.750</span></div><div class="tl" style="top:686.04px;font-size:12px;line-height:15px;font-weight:normal;font-style:normal;color:#000;"><span style="left:1302.46px;transform:scaleX(0.8599)">107:30:17.750</span></div><div class="tl" style="top:722.04px;font-size:12px;line-height:15px;font-weight:normal;font-style:normal;color:#000;"><span style="left:2.24px;transform:scaleX(0.9000)">For</span> <span style="left:23.15px;transform:scaleX(0.8674)">Help,</span> <span style="left:51.42px;transform:scaleX(0.9542)">press</span> <span style="left:84.19px;transform:scaleX(0.7634)">F1</span></div><div class="tl" style="top:723.54px;font-size:12px;line-height:15px;font-weight:normal;font-style:normal;color:#000;"><span style="left:1283.53px;transform:scaleX(0.9212)">2025年9月27日</span></div>
<div class="abs" style="left:1364px;top:77px;width:2px;height:641px;background:#fff"></div>
<!-- TASKBAR -->
<div id="task" class="abs">
<div class="abs" style="left:0;top:0;width:109px;height:30px;border-radius:0 7px 7px 0/0 15px 15px 0;background:linear-gradient(to bottom,#2F7F2F 0%,#52B052 7%,#48A648 16%,#3F9F3F 30%,#44A444 50%,#3E9C3E 75%,#338A33 88%,#2A772A 100%);box-shadow:inset -4px 0 5px rgba(0,50,0,.45), inset 2px 0 3px rgba(0,50,0,.3), 2px 0 3px rgba(0,0,80,.45)"></div><svg class="abs" style="left:10.500px;top:5px" width="20" height="18" viewBox="0 0 20 18"><path d="M2.500 2.500C4.500 1 7 1 9 2.500L7.800 8C6 6.800 3.500 6.800 1.300 8Z" fill="#E8603C"/><path d="M10.300 2.800C12.500 4 15 4 17.500 2.500L16.300 8C14 9.300 11.500 9.300 9.200 8.200Z" fill="#7CBF3A"/><path d="M1 9.300C3.200 8 5.600 8 7.500 9.300L6.300 14.800C4.500 13.600 2 13.600 0 15Z" fill="#4B8DE8"/><path d="M8.800 9.600C11 10.800 13.600 10.800 16 9.300L14.800 14.800C12.500 16.200 10 16.200 7.600 15Z" fill="#F6C530"/></svg><div class="t" style="left:34px;top:6px;color:#fff;font-weight:bold;font-style:italic;font-size:15px;line-height:18px;letter-spacing:-1.700px;text-shadow:1px 1px 1px rgba(0,0,0,.5)">スタート</div><div class="abs" style="left:120px;top:4px;width:158px;height:23px;border-radius:3px;background:linear-gradient(to bottom,#5A9BFA 0%,#3C81F3 12%,#3A7EEF 75%,#316FE0 100%);box-shadow:inset 1px 1px 0 rgba(255,255,255,.25), inset -1px -1px 1px rgba(0,0,60,.35)"></div><svg class="abs" style="left:129px;top:8px" width="16" height="11.500" viewBox="0 0 18 13"><path d="M1 6L5 2H14L17 6V10L14 12H4L1 10Z" fill="#C8C8C8" stroke="#707070" stroke-width=".8"/><path d="M1.500 6.500H16.500" stroke="#fff"/><path d="M2 9.500H16" stroke="#606060" stroke-width="1.500"/><rect x="12" y="7.500" width="2" height="1" fill="#30C030"/></svg><div class="tl" style="top:7.74px;font-size:12px;line-height:15px;font-weight:normal;font-style:normal;color:#fff;"><span style="left:148.95px;transform:scaleX(0.8871)">USB</span> <span style="left:175.85px;transform:scaleX(0.8638)">DISK</span> <span style="left:205.15px;transform:scaleX(0.8844)">(F:)</span></div><div class="abs" style="left:280px;top:4px;width:158px;height:23px;border-radius:3px;background:linear-gradient(to bottom,#1A45A8 0%,#1E52B7 15%,#2058C2 80%,#2560D0 100%);box-shadow:inset 1px 1px 1px rgba(0,0,50,.5), inset -1px -1px 0 rgba(255,255,255,.12)"></div><svg class="abs" style="left:290px;top:8px" width="16" height="16" viewBox="0 0 16 16"><rect width="16" height="16" fill="#fff"/><g fill="#000"><rect y="3.200" width="7.500" height="1.400"/><rect y="6.200" width="7.500" height="1.400"/><rect y="9.300" width="7.500" height="1.400"/><rect y="12.300" width="7.500" height="1.400"/></g><g fill="#9a9a9a"><rect x="7.500" y="3.200" width="6.500" height="1.400"/><rect x="7.500" y="6.200" width="6.500" height="1.400"/><rect x="7.500" y="9.300" width="6.500" height="1.400"/><rect x="7.500" y="12.300" width="6.500" height="1.400"/></g><g fill="#f0b0b0"><rect x="13.500" y="3.200" width="2.500" height="1.400"/><rect x="13.500" y="6.200" width="2.500" height="1.400"/><rect x="13.500" y="9.300" width="2.500" height="1.400"/><rect x="13.500" y="12.300" width="2.500" height="1.400"/></g><path d="M0.700 14.200C2.200 13 3.500 1.600 5.500 1.600C7.500 1.600 8 14.200 10.300 14.200C12.500 14.200 12.800 2.200 15.600 1.200" fill="none" stroke="#B82020" stroke-width="1.400"/></svg><div class="tl" style="top:8.74px;font-size:12px;line-height:15px;font-weight:normal;font-style:normal;color:#fff;"><span style="left:309.34px;transform:scaleX(0.8909)">09210705_09261102</span> <span style="left:413.68px;transform:scaleX(0.8071)">-...</span></div><svg class="abs" style="left:985px;top:4px" width="200" height="24" viewBox="985 742 200 24"><rect x="991.500" y="750.500" width="15" height="8" rx="1" fill="#101030" stroke="#fff"/><path d="M993 752.500H1006M993 754.500H1006M994 756.500H1005" stroke="#fff" stroke-dasharray="1 1"/><path d="M994 749.500L996 747.500L998 749.500L1000 747.500L1002 749.500L1004 747.500" fill="none" stroke="#fff" stroke-width=".8"/><circle cx="1017" cy="751.500" r="5.800" fill="#E0102A"/><circle cx="1015" cy="749.500" r="2" fill="#FF8090"/><path d="M1024.500 745L1023.500 757L1021 759.500" fill="none" stroke="#F0E0D0" stroke-width="2"/><path d="M1024.500 745L1024 751" stroke="#D03030" stroke-width="1.200"/><path d="M1017 758L1022 760" stroke="#202020" stroke-width="1.500"/><ellipse cx="1079" cy="756" rx="7.500" ry="4" fill="#F0E090" stroke="#807020" stroke-width=".8"/><rect x="1072" y="752" width="11" height="4" fill="#F8F0C0"/><circle cx="1083.500" cy="748.500" r="3.500" fill="#C8D8E8" stroke="#808890"/><path d="M1075 746L1077 753M1078.500 745L1079 752" stroke="#C03020" stroke-width="1.600"/><path d="M1091.500 752L1096 748H1106L1108 750V756L1103 760H1091.500Z" fill="#E8B0B8" stroke="#906070" stroke-width=".8"/><path d="M1091.500 752H1103L1108 749M1103 752V760" fill="none" stroke="#906070" stroke-width=".8"/><path d="M1096 749L1098 746.500H1103L1104 748" fill="none" stroke="#403030" stroke-width="1.200"/><path d="M1115 746.500H1127V758H1124L1125 761L1121 758H1115Z" fill="#FFFFD0" stroke="#000" stroke-width=".9"/><text x="1117.800" y="756.500" font-family="Liberation Sans, sans-serif" font-weight="bold" font-size="11" fill="#000">?</text><path d="M1165.500 746V744.500H1170.500V747.500H1169" fill="none" stroke="#fff"/><rect x="1163.500" y="746.500" width="5" height="3" fill="none" stroke="#fff"/><path d="M1163.500 757H1169.500L1166.500 760Z" fill="#fff"/><text x="1137" y="749.600" font-family="Liberation Sans, sans-serif" font-weight="bold" font-size="6.500" fill="#fff" letter-spacing=".5">CAPS</text><text x="1137" y="761.200" font-family="Liberation Sans, sans-serif" font-weight="bold" font-size="6.500" fill="#fff" letter-spacing=".5">KANA</text></svg><div class="tl" style="top:3.92px;font-size:19px;line-height:24px;font-weight:normal;font-style:normal;color:#fff;"><span style="left:1039.74px;transform:scaleX(0.6621)">A</span></div><div class="tl" style="top:6.40px;font-size:15px;line-height:19px;font-weight:normal;font-style:normal;color:#fff;"><span style="left:1051.10px;transform:scaleX(1.0189)">般</span></div><div class="abs" style="left:1258px;top:0;width:108px;height:30px;background:linear-gradient(to bottom,#1690E0 0%,#19B0F5 7%,#129AEC 20%,#0F8DE6 55%,#0E84DC 85%,#0A62B8 100%);box-shadow:inset 1px 0 0 #0A50A8, inset 2px 0 1px rgba(120,200,255,.5)"></div><svg class="abs" style="left:1248px;top:6px" width="20" height="20" viewBox="0 0 20 20"><circle cx="10" cy="10" r="8.500" fill="#2B7CEC" stroke="#8CC0FF" stroke-width="1"/><circle cx="10" cy="10" r="7.500" fill="none" stroke="#1A5CD0" stroke-width=".6"/><path d="M11.500 6L7.500 10L11.500 14" fill="none" stroke="#fff" stroke-width="2"/></svg><svg class="abs" style="left:1266px;top:4px" width="60" height="24" viewBox="1266 742 60 24"><rect x="1273" y="745" width="8" height="7" fill="#4858A8" stroke="#202860" stroke-width=".8"/><rect x="1268" y="750" width="9" height="8" fill="#5868B8" stroke="#202860" stroke-width=".8"/><rect x="1269" y="759" width="8" height="2" fill="#B0B0C8"/><path d="M1276 757L1283 764M1283 757L1276 764" stroke="#E01010" stroke-width="2"/><rect x="1287" y="749" width="9" height="8" fill="#5868B8" stroke="#202860" stroke-width=".8"/><rect x="1287" y="758" width="9" height="2" fill="#B0B0C8"/><path d="M1298 748a4 4 0 0 1 0 6M1300 746.500a6 6 0 0 1 0 9.500M1302 745a8 8 0 0 1 0 12" fill="none" stroke="#D8E8FF" stroke-width=".9"/><path d="M1294 757L1301 764M1301 757L1294 764" stroke="#E01010" stroke-width="2"/><rect x="1305.500" y="746.500" width="15" height="11" fill="#081830" stroke="#000"/><path d="M1307 756L1311 749L1314 754L1316 751L1319 756Z" fill="#6088D8"/><circle cx="1311" cy="750" r="1.500" fill="#E8E8F8"/><rect x="1310" y="758" width="6" height="2" fill="#101010"/><rect x="1308" y="760" width="10" height="1.500" fill="#303030"/></svg><div class="tl" style="top:8.04px;font-size:12px;line-height:15px;font-weight:normal;font-style:normal;color:#fff;"><span style="left:1326.65px;transform:scaleX(0.8658)">14:38</span></div>
</div>
</body>
</html>
